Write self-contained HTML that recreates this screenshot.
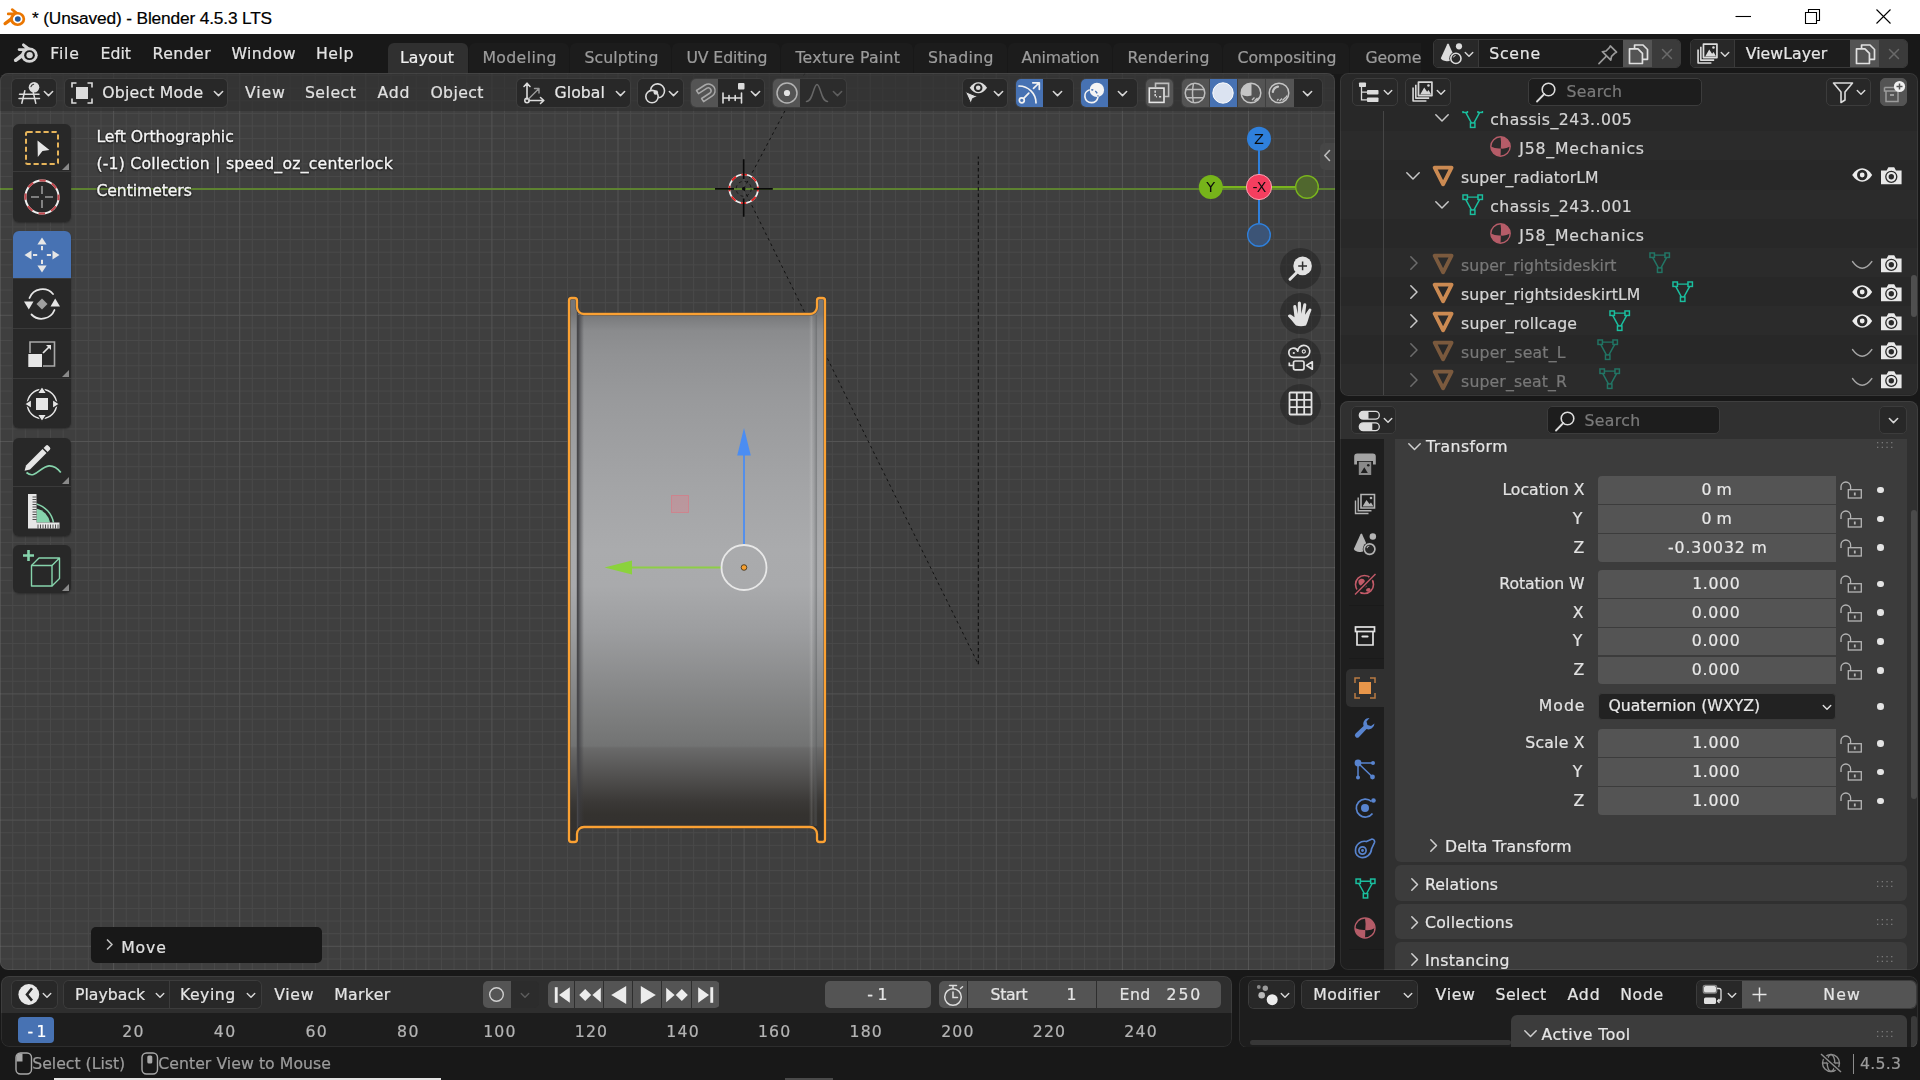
<!DOCTYPE html>
<html lang="en">
<head>
<meta charset="utf-8">
<title>* (Unsaved) - Blender 4.5.3 LTS</title>
<style>
*{box-sizing:border-box;margin:0;padding:0}
html,body{width:1920px;height:1080px;overflow:hidden;background:#181818}
body{position:relative;font-family:"DejaVu Sans","Liberation Sans",sans-serif;font-size:15.7px;color:#e0e0e0;line-height:20px}
.a{position:absolute}
.t{position:absolute;white-space:pre;line-height:20px;height:20px;-webkit-text-stroke:0.22px currentColor}
svg{position:absolute;overflow:visible}
.area{position:absolute;border-radius:8px;overflow:hidden}
.area::after{content:"";position:absolute;left:0;top:0;right:0;bottom:0;border-radius:8px;border:1px solid rgba(255,255,255,0.075);pointer-events:none}
#vp,#outliner,#props,#timeline,#nodeed,#status,#topbar{will-change:transform}
.btn{position:absolute;background:#282828;border:1px solid #3a3a3a;border-radius:5px}
.dim{color:#9a9a9a}
.num{position:absolute;background:#545454;left:1597px;width:239px;height:28px}
.num .t{left:0;width:239px;text-align:center;top:4px;color:#e6e6e6}
.lbl{position:absolute;text-align:right;width:200px;left:1384px;white-space:pre;height:20px}
.dot{position:absolute;left:1877px;width:7px;height:7px;border-radius:50%;background:#e0e0e0}
.panel{position:absolute;left:1395px;width:512px;background:#3d3d3d;border-radius:6px}
</style>
</head>
<body>
<svg width="0" height="0" style="position:absolute;left:0;top:0;width:0;height:0;overflow:hidden" aria-hidden="true">
<defs>
<symbol id="chev" viewBox="0 0 12 8"><path d="M1.5 1.5 L6 6 L10.5 1.5" fill="none" stroke="currentColor" stroke-width="1.7" stroke-linecap="round" stroke-linejoin="round"/></symbol>
<symbol id="chevr" viewBox="0 0 8 12"><path d="M1.5 1.5 L6 6 L1.5 10.5" fill="none" stroke="currentColor" stroke-width="1.7" stroke-linecap="round" stroke-linejoin="round"/></symbol>

<symbol id="i-scene" viewBox="0 0 23 23"><path d="M7.200 2.200Q8 0.800 8.800 2.200L14 14Q12.500 19.600 6.500 19.200Q1.800 18.600 0.800 16.200Z" fill="currentColor"/><circle cx="19" cy="4.300" r="3.100" fill="currentColor"/><circle cx="15.900" cy="16.400" r="6.600" fill="#282828"/><circle cx="15.900" cy="16.400" r="5.100" fill="none" stroke="currentColor" stroke-width="1.600"/><path d="M13.400 15.400A2.800 2.800 0 0 1 15.600 13.400" fill="none" stroke="currentColor" stroke-width="1"/></symbol>
<symbol id="i-pin" viewBox="0 0 20 20"><path d="M12.2 2.5 L17.5 7.8 L16 8.6 L13.2 11.4 L12.6 14.6 L5.4 7.4 L8.6 6.8 L11.4 4Z" fill="none" stroke="currentColor" stroke-width="1.4" stroke-linejoin="round"/><path d="M8.6 11.4 L2.5 17.5" stroke="currentColor" stroke-width="1.4" stroke-linecap="round"/></symbol>
<symbol id="i-copy" viewBox="0 0 20 20"><path d="M6.5 5 V1.8 H14 L18 5.8 V14.5 H13.5" fill="none" stroke="currentColor" stroke-width="1.5" stroke-linejoin="round"/><path d="M2 5.2 H9.5 L13.5 9.2 V18.2 H2Z" fill="none" stroke="currentColor" stroke-width="1.5" stroke-linejoin="round"/></symbol>
<symbol id="i-x" viewBox="0 0 12 12"><path d="M1.5 1.5 L10.5 10.5 M10.5 1.5 L1.5 10.5" stroke="currentColor" stroke-width="1.5" stroke-linecap="round"/></symbol>
<symbol id="i-layers" viewBox="0 0 20 20"><path d="M6.5 1.8 H18.2 V13.5 H6.5Z" fill="none" stroke="currentColor" stroke-width="1.5" stroke-linejoin="round"/><path d="M8 12.5 L11.5 6.5 L14 10.2 L15.3 8.8 L17.5 12.5Z" fill="currentColor"/><circle cx="15.2" cy="4.8" r="1.1" fill="currentColor"/><path d="M4.2 4.2 V15.8 H15.8 M1.8 6.6 V18.2 H13.4" fill="none" stroke="currentColor" stroke-width="1.4" stroke-linejoin="round"/></symbol>
</defs>
</svg>

<!-- TITLEBAR -->
<div class="a" id="titlebar" style="left:0;top:0;width:1920px;height:34px;background:#fff">
<svg style="left:3px;top:7px" width="23" height="21" viewBox="0 0 23 21">
<path d="M1.2 15.2 L10.2 8.2 L5.2 8.2 A1.3 1.3 0 0 1 5.2 5.6 L10.6 5.6 L8.3 3.6 A1.3 1.3 0 0 1 10 1.6 L19.6 9 L12 11.4 L3 18 A1.5 1.5 0 0 1 1.2 15.2Z" fill="#ea7600"/>
<ellipse cx="14.6" cy="12" rx="7.6" ry="7" fill="#ea7600"/>
<ellipse cx="14.7" cy="12" rx="4.8" ry="4.4" fill="#fff"/>
<ellipse cx="14.8" cy="12" rx="2.9" ry="2.8" fill="#255a9b"/>
</svg>
<span class="t" style="letter-spacing:-0.15px;left:32px;top:7px;font-family:'Liberation Sans',sans-serif;font-size:17.3px;color:#000;line-height:22px;height:22px">* (Unsaved) - Blender 4.5.3 LTS</span>
<svg style="left:1735px;top:9px" width="160" height="16" viewBox="0 0 160 16" fill="none" stroke="#000" stroke-width="1.1">
<path d="M0.5 7.5 H16"/>
<path d="M70.5 3.5 H81.5 V14.5 H70.5Z"/><path d="M73.5 3.5 V0.5 H84.5 V11.5 H81.5"/>
<path d="M141.5 0.5 L155.5 14.5 M155.5 0.5 L141.5 14.5"/>
</svg>
</div>
<!-- TOPBAR -->
<div class="a" id="topbar" style="left:0;top:34px;width:1920px;height:40px;background:#181818">
<svg style="left:13px;top:8px" width="26" height="23" viewBox="0 0 23 21">
<path d="M1.2 15.2 L10.2 8.2 L5.2 8.2 A1.3 1.3 0 0 1 5.2 5.6 L10.6 5.6 L8.3 3.6 A1.3 1.3 0 0 1 10 1.6 L19.6 9 L12 11.4 L3 18 A1.5 1.5 0 0 1 1.2 15.2Z" fill="#d4d4d4"/>
<ellipse cx="14.6" cy="12" rx="7.6" ry="7" fill="#d4d4d4"/>
<ellipse cx="14.7" cy="12" rx="4.9" ry="4.5" fill="#181818"/>
<ellipse cx="14.8" cy="12" rx="2.9" ry="2.8" fill="#d4d4d4"/>
</svg>
<span class="t" style="letter-spacing:0.82px;left:50.2px;top:10.3px;color:#e3e3e3">File</span>
<span class="t" style="letter-spacing:-0.03px;left:100.6px;top:10.3px;color:#e3e3e3">Edit</span>
<span class="t" style="letter-spacing:0.43px;left:152.6px;top:10.3px;color:#e3e3e3">Render</span>
<span class="t" style="letter-spacing:0.47px;left:231.4px;top:10.3px;color:#e3e3e3">Window</span>
<span class="t" style="letter-spacing:0.58px;left:315.9px;top:10.3px;color:#e3e3e3">Help</span>
<div class="a" style="left:388px;top:9px;width:1040px;height:31px;overflow:hidden">
<div class="a" style="left:0px;top:0;width:79.5px;height:31px;border-radius:6px 6px 0 0;background:#303030"></div>
<span class="t" style="letter-spacing:0.13px;left:11.9px;top:5.3px;color:#f0f0f0">Layout</span>
<div class="a" style="left:80.5px;top:0;width:100.5px;height:31px;border-radius:6px 6px 0 0;background:#1c1c1c"></div>
<span class="t" style="letter-spacing:0.38px;left:94.4px;top:5.3px;color:#9c9c9c">Modeling</span>
<div class="a" style="left:182px;top:0;width:101px;height:31px;border-radius:6px 6px 0 0;background:#1c1c1c"></div>
<span class="t" style="letter-spacing:0.09px;left:196.4px;top:5.3px;color:#9c9c9c">Sculpting</span>
<div class="a" style="left:284px;top:0;width:108px;height:31px;border-radius:6px 6px 0 0;background:#1c1c1c"></div>
<span class="t" style="letter-spacing:-0.09px;left:298.4px;top:5.3px;color:#9c9c9c">UV Editing</span>
<div class="a" style="left:393px;top:0;width:132px;height:31px;border-radius:6px 6px 0 0;background:#1c1c1c"></div>
<span class="t" style="letter-spacing:0.27px;left:407.4px;top:5.3px;color:#9c9c9c">Texture Paint</span>
<div class="a" style="left:526px;top:0;width:92.5px;height:31px;border-radius:6px 6px 0 0;background:#1c1c1c"></div>
<span class="t" style="letter-spacing:0.29px;left:539.9px;top:5.3px;color:#9c9c9c">Shading</span>
<div class="a" style="left:619.5px;top:0;width:104.5px;height:31px;border-radius:6px 6px 0 0;background:#1c1c1c"></div>
<span class="t" style="letter-spacing:-0.25px;left:633.4px;top:5.3px;color:#9c9c9c">Animation</span>
<div class="a" style="left:725px;top:0;width:109px;height:31px;border-radius:6px 6px 0 0;background:#1c1c1c"></div>
<span class="t" style="letter-spacing:0.24px;left:739.4px;top:5.3px;color:#9c9c9c">Rendering</span>
<div class="a" style="left:835px;top:0;width:126px;height:31px;border-radius:6px 6px 0 0;background:#1c1c1c"></div>
<span class="t" style="letter-spacing:0.07px;left:849.4px;top:5.3px;color:#9c9c9c">Compositing</span>
<div class="a" style="left:962px;top:0;width:90px;height:31px;border-radius:6px 6px 0 0;background:#1c1c1c"></div>
<span class="t" style="left:977.5px;top:5.3px;color:#9c9c9c;letter-spacing:-0.1px">Geometry Nodes</span>
</div>
<div class="a" style="left:1421px;top:0;width:12px;height:40px;background:#181818"></div>
<div class="a" style="left:1433px;top:5px;width:248px;height:29px;border-radius:5px;background:#1d1d1d;border:1px solid #3a3a3a;overflow:hidden">
<div class="a" style="left:0;top:0;width:45px;height:27px;background:#282828;border-right:1px solid #3a3a3a"></div>
<div class="a" style="left:189px;top:0;width:29px;height:27px;background:#545454"></div>
<div class="a" style="left:218px;top:0;width:30px;height:27px;background:#3b3b3b"></div>
</div>
<svg style="left:1439.500px;top:8px;color:#dcdcdc" width="23" height="23"><use href="#i-scene" width="23" height="23"/></svg>
<svg style="left:1464px;top:17px;color:#d6d6d6" width="10" height="7"><use href="#chev" width="10" height="7"/></svg>
<span class="t" style="letter-spacing:0.79px;left:1489.2px;top:10.3px;color:#e6e6e6">Scene</span>
<svg style="left:1595.500px;top:8.500px;color:#9a9a9a" width="23.500" height="23.500"><use href="#i-pin" width="23.500" height="23.500"/></svg>
<svg style="left:1626.500px;top:8.500px;color:#e0e0e0" width="23" height="22.500"><use href="#i-copy" width="23" height="22.500"/></svg>
<svg style="left:1661px;top:14px;color:#6a6a6a" width="12" height="12"><use href="#i-x" width="12" height="12"/></svg>
<div class="a" style="left:1690px;top:5px;width:218px;height:29px;border-radius:5px;background:#1d1d1d;border:1px solid #3a3a3a;overflow:hidden">
<div class="a" style="left:0;top:0;width:44px;height:27px;background:#282828;border-right:1px solid #3a3a3a"></div>
<div class="a" style="left:159px;top:0;width:29px;height:27px;background:#545454"></div>
<div class="a" style="left:188px;top:0;width:30px;height:27px;background:#3b3b3b"></div>
</div>
<svg style="left:1695.500px;top:8px;color:#dcdcdc" width="23" height="23"><use href="#i-layers" width="23" height="23"/></svg>
<svg style="left:1720px;top:17px;color:#d6d6d6" width="10" height="7"><use href="#chev" width="10" height="7"/></svg>
<span class="t" style="letter-spacing:0.07px;left:1745.7px;top:10.3px;color:#e6e6e6">ViewLayer</span>
<svg style="left:1853.500px;top:8.500px;color:#e0e0e0" width="23" height="22.500"><use href="#i-copy" width="23" height="22.500"/></svg>
<svg style="left:1888px;top:14px;color:#6a6a6a" width="12" height="12"><use href="#i-x" width="12" height="12"/></svg>
</div>
<!-- VIEWPORT -->
<div class="area" id="vp" style="left:0px;top:73px;width:1335px;height:897px;background:#3f3f3f">
<svg id="vpsvg" style="left:0;top:-73px" width="1920" height="1080" viewBox="0 0 1920 1080">
<defs>
<linearGradient id="gbar" gradientUnits="userSpaceOnUse" x1="0" y1="314" x2="0" y2="827">
<stop offset="0" stop-color="#757678"/><stop offset="0.012" stop-color="#7e7f81"/><stop offset="0.032" stop-color="#8a8b8d"/><stop offset="0.08" stop-color="#919294"/><stop offset="0.17" stop-color="#999a9c"/><stop offset="0.33" stop-color="#a3a4a6"/><stop offset="0.46" stop-color="#aaabad"/><stop offset="0.53" stop-color="#a9aaac"/><stop offset="0.62" stop-color="#9c9d9f"/><stop offset="0.72" stop-color="#898a8b"/><stop offset="0.80" stop-color="#7a7b7b"/><stop offset="0.842" stop-color="#727373"/><stop offset="0.846" stop-color="#6a6a6a"/><stop offset="0.90" stop-color="#525150"/><stop offset="0.95" stop-color="#3b3937"/><stop offset="0.975" stop-color="#34322f"/><stop offset="1" stop-color="#33312f"/>
</linearGradient>
<linearGradient id="gls" gradientUnits="userSpaceOnUse" x1="578" y1="0" x2="584" y2="0">
<stop offset="0" stop-color="#3c3c40" stop-opacity="0.85"/><stop offset="0.4" stop-color="#3c3c40" stop-opacity="0.5"/><stop offset="1" stop-color="#3c3c40" stop-opacity="0"/>
</linearGradient>
<linearGradient id="grs" gradientUnits="userSpaceOnUse" x1="809" y1="0" x2="817.200" y2="0">
<stop offset="0" stop-color="#fff" stop-opacity="0"/><stop offset="0.3" stop-color="#fff" stop-opacity="0.14"/><stop offset="0.55" stop-color="#808284" stop-opacity="0.10"/><stop offset="0.9" stop-color="#55585a" stop-opacity="0.45"/><stop offset="1" stop-color="#55585a" stop-opacity="0.1"/>
</linearGradient>
</defs>
<path d="M0.11 73V971M12.72 73V971M25.33 73V971M37.94 73V971M50.55 73V971M63.16 73V971M75.77 73V971M88.38 73V971M100.99 73V971M126.21 73V971M138.82 73V971M151.43 73V971M164.04 73V971M176.65 73V971M189.26 73V971M201.87 73V971M214.48 73V971M227.09 73V971M252.31 73V971M264.92 73V971M277.53 73V971M290.14 73V971M302.75 73V971M315.36 73V971M327.97 73V971M340.58 73V971M353.19 73V971M378.41 73V971M391.02 73V971M403.63 73V971M416.24 73V971M428.85 73V971M441.46 73V971M454.07 73V971M466.68 73V971M479.29 73V971M504.51 73V971M517.12 73V971M529.73 73V971M542.34 73V971M554.95 73V971M567.56 73V971M580.17 73V971M592.78 73V971M605.39 73V971M630.61 73V971M643.22 73V971M655.83 73V971M668.44 73V971M681.05 73V971M693.66 73V971M706.27 73V971M718.88 73V971M731.49 73V971M756.71 73V971M769.32 73V971M781.93 73V971M794.54 73V971M807.15 73V971M819.76 73V971M832.37 73V971M844.98 73V971M857.59 73V971M882.81 73V971M895.42 73V971M908.03 73V971M920.64 73V971M933.25 73V971M945.86 73V971M958.47 73V971M971.08 73V971M983.69 73V971M1008.91 73V971M1021.52 73V971M1034.13 73V971M1046.74 73V971M1059.35 73V971M1071.96 73V971M1084.57 73V971M1097.18 73V971M1109.79 73V971M1135.01 73V971M1147.62 73V971M1160.23 73V971M1172.84 73V971M1185.45 73V971M1198.06 73V971M1210.67 73V971M1223.28 73V971M1235.89 73V971M1261.11 73V971M1273.72 73V971M1286.33 73V971M1298.94 73V971M1311.55 73V971M1324.16 73V971M0 75.52H1336M0 88.14H1336M0 100.76H1336M0 113.38H1336M0 126.00H1336M0 138.62H1336M0 151.24H1336M0 163.86H1336M0 176.48H1336M0 201.72H1336M0 214.34H1336M0 226.96H1336M0 239.58H1336M0 252.20H1336M0 264.82H1336M0 277.44H1336M0 290.06H1336M0 302.68H1336M0 327.92H1336M0 340.54H1336M0 353.16H1336M0 365.78H1336M0 378.40H1336M0 391.02H1336M0 403.64H1336M0 416.26H1336M0 428.88H1336M0 454.12H1336M0 466.74H1336M0 479.36H1336M0 491.98H1336M0 504.60H1336M0 517.22H1336M0 529.84H1336M0 542.46H1336M0 555.08H1336M0 580.32H1336M0 592.94H1336M0 605.56H1336M0 618.18H1336M0 630.80H1336M0 643.42H1336M0 656.04H1336M0 668.66H1336M0 681.28H1336M0 706.52H1336M0 719.14H1336M0 731.76H1336M0 744.38H1336M0 757.00H1336M0 769.62H1336M0 782.24H1336M0 794.86H1336M0 807.48H1336M0 832.72H1336M0 845.34H1336M0 857.96H1336M0 870.58H1336M0 883.20H1336M0 895.82H1336M0 908.44H1336M0 921.06H1336M0 933.68H1336M0 958.92H1336" stroke="#4a4a4a" stroke-width="1" fill="none"/>
<path d="M113.60 73V971M239.70 73V971M365.80 73V971M491.90 73V971M618.00 73V971M744.10 73V971M870.20 73V971M996.30 73V971M1122.40 73V971M1248.50 73V971M0 189.10H1336M0 315.30H1336M0 441.50H1336M0 567.70H1336M0 693.90H1336M0 820.10H1336M0 946.30H1336" stroke="#545454" stroke-width="1" fill="none"/>
<path d="M0 189H1336" stroke="#649628" stroke-width="1.600" fill="none"/>
<g stroke="#0c0c0c" fill="none"><path d="M743.700 188.800L805 73" stroke-width="1" stroke-dasharray="2.800 3.300" opacity="0.900"/><path d="M743.700 188.800L978.300 664.300" stroke-width="1" stroke-dasharray="2.800 3.300" opacity="0.900"/><path d="M978.300 664.300V156.500" stroke-width="1.100" stroke-dasharray="3.500 2.900"/></g>
<path d="M569 300.500 Q569 298 571.500 298 H574.500 Q577 298 577 300.500 V307 A7 7 0 0 0 584 314 H810 A7 7 0 0 0 817 307 V300.500 Q817 298 819.500 298 H822.500 Q825 298 825 300.500 V839.500 Q825 842 822.500 842 H819.500 Q817 842 817 839.500 V834 A7 7 0 0 0 810 827 H584 A7 7 0 0 0 577 834 V839.500 Q577 842 574.500 842 H571.500 Q569 842 569 839.500Z" fill="url(#gbar)"/>
<rect x="578" y="315" width="6" height="511" fill="url(#gls)"/>
<path d="M577.500 312V829" stroke="#47474a" stroke-width="1.400"/>
<rect x="809" y="315" width="8.200" height="511" fill="url(#grs)"/>
<path d="M569 300.500 Q569 298 571.500 298 H574.500 Q577 298 577 300.500 V307 A7 7 0 0 0 584 314 H810 A7 7 0 0 0 817 307 V300.500 Q817 298 819.500 298 H822.500 Q825 298 825 300.500 V839.500 Q825 842 822.500 842 H819.500 Q817 842 817 839.500 V834 A7 7 0 0 0 810 827 H584 A7 7 0 0 0 577 834 V839.500 Q577 842 574.500 842 H571.500 Q569 842 569 839.500Z" fill="none" stroke="#2e3238" stroke-opacity="0.450" stroke-width="3.800" stroke-linejoin="round"/>
<path d="M569 300.500 Q569 298 571.500 298 H574.500 Q577 298 577 300.500 V307 A7 7 0 0 0 584 314 H810 A7 7 0 0 0 817 307 V300.500 Q817 298 819.500 298 H822.500 Q825 298 825 300.500 V839.500 Q825 842 822.500 842 H819.500 Q817 842 817 839.500 V834 A7 7 0 0 0 810 827 H584 A7 7 0 0 0 577 834 V839.500 Q577 842 574.500 842 H571.500 Q569 842 569 839.500Z" fill="none" stroke="#fba133" stroke-width="2.300" stroke-linejoin="round"/>
<path d="M744 544V452" stroke="#4b8df2" stroke-width="1.800"/><path d="M744 428L750.800 455.500H737.200Z" fill="#4b8df2"/>
<path d="M721 567.500H630" stroke="#8bd23c" stroke-width="1.800" opacity="0.900"/><path d="M604.500 567.500L632 560.500V574.500Z" fill="#8bd23c"/>
<rect x="671.500" y="495.500" width="17" height="17" fill="#e87888" fill-opacity="0.330" stroke="#e4707e" stroke-opacity="0.550" stroke-width="1"/>
<circle cx="744" cy="567.500" r="22.500" fill="none" stroke="#e8e8e8" stroke-width="1.800"/>
<circle cx="744" cy="567.500" r="2.800" fill="#f7a030" stroke="#3a2a10" stroke-width="0.800"/>
<g fill="none"><circle cx="743.700" cy="188.800" r="14.300" stroke="#f2f2f2" stroke-width="1.700"/><circle cx="743.700" cy="188.800" r="14.300" stroke="#e81e1e" stroke-width="1.700" stroke-dasharray="5.600 5.630" stroke-dashoffset="2.800"/><path d="M715 188.800H734M753.500 188.800H772.800M743.700 159.200V179M743.700 198.500V216.800" stroke="#0a0a0a" stroke-width="1.700"/><circle cx="743.700" cy="188.800" r="7.500" stroke="#111" stroke-width="1" stroke-dasharray="3 3" opacity="0.800"/><circle cx="743.700" cy="188.800" r="1.800" fill="#0a0a0a"/></g>
</svg>
<div class="a" style="left:0;top:0;width:1335px;height:38px;background:rgba(48,48,48,0.7)"></div>
<div class="a" style="left:12px;top:5.5px;width:44px;height:28px;border-radius:5px;overflow:hidden;box-shadow:0 0 0 1px rgba(70,70,70,0.55)"><div class="a" style="left:0px;top:0;width:44px;height:100%;background:#282828"></div></div>
<div class="a" style="left:65px;top:5.5px;width:162px;height:28px;border-radius:5px;overflow:hidden;box-shadow:0 0 0 1px rgba(70,70,70,0.55)"><div class="a" style="left:0px;top:0;width:162px;height:100%;background:#282828"></div></div>
<div class="a" style="left:517px;top:5.5px;width:112.5px;height:28px;border-radius:5px;overflow:hidden;box-shadow:0 0 0 1px rgba(70,70,70,0.55)"><div class="a" style="left:0px;top:0;width:112.5px;height:100%;background:#282828"></div></div>
<div class="a" style="left:638px;top:5.5px;width:44.5px;height:28px;border-radius:5px;overflow:hidden;box-shadow:0 0 0 1px rgba(70,70,70,0.55)"><div class="a" style="left:0px;top:0;width:44.5px;height:100%;background:#282828"></div></div>
<div class="a" style="left:690.7px;top:5.5px;width:73.8px;height:28px;border-radius:5px;overflow:hidden;box-shadow:0 0 0 1px rgba(70,70,70,0.55)"><div class="a" style="left:0px;top:0;width:27.8px;height:100%;background:#545454"></div><div class="a" style="left:27.8px;top:0;width:46px;height:100%;background:#282828"></div></div>
<div class="a" style="left:772.8px;top:5.5px;width:73.2px;height:28px;border-radius:5px;overflow:hidden;box-shadow:0 0 0 1px rgba(70,70,70,0.55)"><div class="a" style="left:0px;top:0;width:27.7px;height:100%;background:#545454"></div><div class="a" style="left:27.7px;top:0;width:45.5px;height:100%;background:#2c2c2c"></div></div>
<div class="a" style="left:962.6px;top:5.5px;width:44.9px;height:28px;border-radius:5px;overflow:hidden;box-shadow:0 0 0 1px rgba(70,70,70,0.55)"><div class="a" style="left:0px;top:0;width:44.9px;height:100%;background:#282828"></div></div>
<div class="a" style="left:1016px;top:5.5px;width:56.5px;height:28px;border-radius:5px;overflow:hidden;box-shadow:0 0 0 1px rgba(70,70,70,0.55)"><div class="a" style="left:0px;top:0;width:27px;height:100%;background:#4772b3"></div><div class="a" style="left:27px;top:0;width:29.5px;height:100%;background:#282828"></div></div>
<div class="a" style="left:1081px;top:5.5px;width:56px;height:28px;border-radius:5px;overflow:hidden;box-shadow:0 0 0 1px rgba(70,70,70,0.55)"><div class="a" style="left:0px;top:0;width:27px;height:100%;background:#4772b3"></div><div class="a" style="left:27px;top:0;width:29px;height:100%;background:#282828"></div></div>
<div class="a" style="left:1146px;top:5.5px;width:27px;height:28px;border-radius:5px;overflow:hidden;box-shadow:0 0 0 1px rgba(70,70,70,0.55)"><div class="a" style="left:0px;top:0;width:27px;height:100%;background:#545454"></div></div>
<div class="a" style="left:1182px;top:5.5px;width:140px;height:28px;border-radius:5px;overflow:hidden;box-shadow:0 0 0 1px rgba(70,70,70,0.55)"><div class="a" style="left:0px;top:0;width:27.5px;height:100%;background:#545454"></div><div class="a" style="left:27.5px;top:0;width:27.5px;height:100%;background:#4772b3"></div><div class="a" style="left:55px;top:0;width:28.5px;height:100%;background:#545454"></div><div class="a" style="left:83.5px;top:0;width:28px;height:100%;background:#545454"></div><div class="a" style="left:111.5px;top:0;width:28.5px;height:100%;background:#282828"></div></div>
<div class="a" style="left:1209px;top:5.5px;width:1px;height:28px;background:#3f3f3f"></div>
<div class="a" style="left:1237px;top:5.5px;width:1px;height:28px;background:#3f3f3f"></div>
<div class="a" style="left:1265.2px;top:5.5px;width:1px;height:28px;background:#3f3f3f"></div>
<span class="t" style="letter-spacing:0.21px;left:102.2px;top:9.9px;color:#e6e6e6">Object Mode</span>
<span class="t" style="letter-spacing:0.92px;left:244.9px;top:9.9px;color:#e0e0e0">View</span>
<span class="t" style="letter-spacing:0.52px;left:304.9px;top:9.9px;color:#e0e0e0">Select</span>
<span class="t" style="letter-spacing:0.81px;left:377.4px;top:9.9px;color:#e0e0e0">Add</span>
<span class="t" style="letter-spacing:0.38px;left:430.4px;top:9.9px;color:#e0e0e0">Object</span>
<span class="t" style="letter-spacing:0.05px;left:554.6px;top:9.9px;color:#e6e6e6">Global</span>
<svg style="left:43px;top:16.5px;color:#d8d8d8" width="11" height="7.5" viewBox="0 0 11 7.5"><use href="#chev" width="11" height="7.5"/></svg>
<svg style="left:213px;top:16.5px;color:#d8d8d8" width="11" height="7.5" viewBox="0 0 11 7.5"><use href="#chev" width="11" height="7.5"/></svg>
<svg style="left:615px;top:16.5px;color:#d8d8d8" width="11" height="7.5" viewBox="0 0 11 7.5"><use href="#chev" width="11" height="7.5"/></svg>
<svg style="left:668px;top:16.5px;color:#d8d8d8" width="11" height="7.5" viewBox="0 0 11 7.5"><use href="#chev" width="11" height="7.5"/></svg>
<svg style="left:750px;top:16.5px;color:#d8d8d8" width="11" height="7.5" viewBox="0 0 11 7.5"><use href="#chev" width="11" height="7.5"/></svg>
<svg style="left:832px;top:16.5px;color:#5e5e5e" width="11" height="7.5" viewBox="0 0 11 7.5"><use href="#chev" width="11" height="7.5"/></svg>
<svg style="left:992.9px;top:16.8px;color:#d8d8d8" width="11" height="7.5" viewBox="0 0 11 7.5"><use href="#chev" width="11" height="7.5"/></svg>
<svg style="left:1052px;top:16.8px;color:#d8d8d8" width="11" height="7.5" viewBox="0 0 11 7.5"><use href="#chev" width="11" height="7.5"/></svg>
<svg style="left:1117px;top:16.8px;color:#d8d8d8" width="11" height="7.5" viewBox="0 0 11 7.5"><use href="#chev" width="11" height="7.5"/></svg>
<svg style="left:1302px;top:16.8px;color:#d8d8d8" width="11" height="7.5" viewBox="0 0 11 7.5"><use href="#chev" width="11" height="7.5"/></svg>
<svg style="left:18px;top:7px;" width="24" height="26" viewBox="0 0 24 26"><g fill="none" stroke="#dcdcdc" stroke-width="1.500" stroke-linecap="round"><path d="M1.500 14.200H21M1 18.400H21.500M6.800 10.800L3.800 23.300M15.300 12.500L17.800 23.300"/></g><circle cx="16" cy="7.300" r="5.300" fill="#dcdcdc"/><path d="M13 6.600A3.300 3.300 0 0 1 15.600 4.200" stroke="#282828" stroke-width="1.100" fill="none" stroke-linecap="round"/></svg>
<svg style="left:71px;top:8.5px;" width="22" height="22" viewBox="0 0 22 22"><path d="M1 5.5V1H5.5M16.5 1H21V5.5M21 16.5V21H16.5M5.5 21H1V16.5" fill="none" stroke="#dcdcdc" stroke-width="1.6"/><rect x="5" y="5" width="12" height="12" fill="#dcdcdc"/></svg>
<svg style="left:522px;top:8px;" width="24" height="24" viewBox="0 0 24 24"><g fill="none" stroke="#dcdcdc" stroke-width="1.6" stroke-linecap="round" stroke-linejoin="round"><path d="M5 18.5V2.5M2 5.5L5 2.2L8 5.5M7 19.5H21.5M18.5 16.5L21.8 19.5L18.5 22.5"/><circle cx="5" cy="19.5" r="2.2"/></g><g fill="none" stroke="#9a9a9a" stroke-width="1.4" stroke-linecap="round" stroke-linejoin="round"><path d="M7 17.5L16.5 8M12.5 7.5H17V12"/></g></svg>
<svg style="left:643px;top:8px;" width="24" height="24" viewBox="0 0 24 24"><g fill="none" stroke="#dcdcdc" stroke-width="1.600"><circle cx="9" cy="15.600" r="6.200"/><path d="M7.600 8.800A7 7 0 1 1 15.400 16.800"/></g><circle cx="12.800" cy="11.500" r="2.300" fill="#dcdcdc"/></svg>
<svg style="left:693px;top:8px;" width="24" height="24" viewBox="0 0 24 24"><path d="M3.5 9.5L12 4A6.6 6.6 0 0 1 19 15.2L10.6 20.6L8.6 17.5L17 12A2.9 2.9 0 0 0 14 7.1L5.5 12.6Z" fill="none" stroke="#a8a8a8" stroke-width="1.5" stroke-linejoin="round"/></svg>
<svg style="left:721px;top:8px;" width="26" height="24" viewBox="0 0 26 24"><g stroke="#dcdcdc" stroke-width="1.6" fill="none" stroke-linecap="round"><path d="M2 12V22M20.5 12V22M2 17H20.5M8 14.5V19.5M14.2 14.5V19.5"/></g><rect x="17" y="2" width="6.5" height="6.5" rx="1" fill="#dcdcdc"/></svg>
<svg style="left:775.5px;top:8.5px;" width="22" height="22" viewBox="0 0 22 22"><circle cx="11" cy="11" r="10" fill="none" stroke="#b4b4b4" stroke-width="1.500"/><circle cx="11" cy="11" r="3.100" fill="#e4e4e4"/></svg>
<svg style="left:805px;top:9px;" width="24" height="22" viewBox="0 0 24 22"><path d="M1.5 19.5C8 19.5 8.5 2.5 12 2.5S16 19.5 22.5 19.5" fill="none" stroke="#666" stroke-width="1.5" stroke-linecap="round"/></svg>
<svg style="left:965px;top:7px;" width="24" height="26" viewBox="0 0 24 26"><path d="M4.700 7.750C7.500 3.800 10.300 2.200 13.400 2.200S19.300 3.800 22.100 7.750C19.300 11.700 16.500 13.300 13.400 13.300S7.500 11.700 4.700 7.750Z" fill="#dcdcdc"/><circle cx="13.200" cy="7.750" r="4.300" fill="#282828"/><circle cx="13.200" cy="7.750" r="2.300" fill="#dcdcdc"/><path d="M0.300 11.500L12.600 16.600L7.600 18.600L5.900 23.700Z" fill="#dcdcdc" stroke="#282828" stroke-width="1"/></svg>
<svg style="left:1018px;top:8px;" width="24" height="24" viewBox="0 0 24 24"><g fill="none" stroke="#f2f2f2" stroke-width="1.700" stroke-linecap="round" stroke-linejoin="round"><circle cx="3.800" cy="19.300" r="2.500"/><path d="M5.700 17.400L10.800 12.200M15.500 7.400L21 2M14.800 1.800H21.300V8.300M1 5A17 17 0 0 1 18 21.800"/></g></svg>
<svg style="left:1084px;top:8px;" width="24" height="24" viewBox="0 0 24 24"><circle cx="12.900" cy="8.900" r="7.200" fill="#f4f4f4"/><path d="M5.700 8.700A6.600 6.600 0 1 0 14 15.900" fill="none" stroke="#f4f4f4" stroke-width="1.700"/><path d="M7.300 8.700A6.600 6.600 0 0 1 13.900 15.300" fill="none" stroke="#4772b3" stroke-width="1.500" stroke-dasharray="3 2.200" stroke-dashoffset="1"/></svg>
<svg style="left:1148px;top:8px;" width="24" height="24" viewBox="0 0 24 24"><g fill="none" stroke-width="1.600" stroke-linejoin="miter"><path d="M7.500 6.300V2.400H20.600V15.500H16.800" stroke="#bdbdbd"/><rect x="1.300" y="7.100" width="14.700" height="14.300" stroke="#e6e6e6"/></g><path d="M7.200 9.500V15.800H9M11 15.800H13.500" stroke="#d8d8d8" stroke-width="1.500" fill="none" stroke-dasharray="2.200 1.400"/></svg>
<svg style="left:1183px;top:8.1px;" width="24" height="24" viewBox="0 0 24 24"><g fill="none" stroke="#bcbcbc" stroke-width="1.500"><circle cx="12" cy="12" r="9.800"/><path d="M3 8.600H21M3 16.700H21M10.500 2.300Q8.500 12 10.500 21.700"/></g></svg>
<svg style="left:1211.1px;top:8.1px;" width="24" height="24" viewBox="0 0 24 24"><circle cx="12" cy="12" r="10.200" fill="#dbe3f1" stroke="#fff" stroke-width="1"/></svg>
<svg style="left:1239px;top:8.1px;" width="24" height="24" viewBox="0 0 24 24"><circle cx="12" cy="12" r="9.800" fill="none" stroke="#c4c4c4" stroke-width="1.500"/><path d="M12 2.200A9.800 9.800 0 0 0 2.400 13.500Q7 16.500 12 14.500Z" fill="#c4c4c4"/><path d="M12 2.200V14.500" stroke="#c4c4c4" stroke-width="1"/><g stroke="#c4c4c4" stroke-width="1.300"><path d="M13 19L15.500 16.500M15.500 20L18.500 17M18 19.500L20.500 16.500"/></g></svg>
<svg style="left:1267.1px;top:8.1px;" width="24" height="24" viewBox="0 0 24 24"><circle cx="12" cy="12" r="9.800" fill="none" stroke="#c4c4c4" stroke-width="1.500"/><path d="M5.800 11A6.600 6.600 0 0 1 11 5.600" stroke="#c4c4c4" stroke-width="2.200" fill="none" stroke-linecap="round"/><g stroke="#c4c4c4" stroke-width="1.300"><path d="M10 19.500L11.500 18M12.500 20L15 17.500M15.500 19.500L18.500 16.500M18.500 17L20 14.500"/></g></svg>
<div class="a" style="left:13px;top:51.2px;width:58px;height:97.5px;border-radius:6px;overflow:hidden;background:#3a3a3a;box-shadow:0 1px 2px rgba(0,0,0,0.35)"><div class="a" style="left:0;top:0px;width:58px;height:47.3px;background:#282828"></div><div class="a" style="left:0;top:48.3px;width:58px;height:49.2px;background:#282828"></div></div>
<div class="a" style="left:13px;top:158.2px;width:58px;height:197.1px;border-radius:6px;overflow:hidden;background:#3a3a3a;box-shadow:0 1px 2px rgba(0,0,0,0.35)"><div class="a" style="left:0;top:0px;width:58px;height:47.3px;background:#4772b3"></div><div class="a" style="left:0;top:48.3px;width:58px;height:49px;background:#282828"></div><div class="a" style="left:0;top:98.3px;width:58px;height:49px;background:#282828"></div><div class="a" style="left:0;top:148.3px;width:58px;height:48.8px;background:#282828"></div></div>
<div class="a" style="left:13px;top:365px;width:58px;height:97.5px;border-radius:6px;overflow:hidden;background:#3a3a3a;box-shadow:0 1px 2px rgba(0,0,0,0.35)"><div class="a" style="left:0;top:0px;width:58px;height:47.5px;background:#282828"></div><div class="a" style="left:0;top:48.5px;width:58px;height:49px;background:#282828"></div></div>
<div class="a" style="left:13px;top:472px;width:58px;height:47.5px;border-radius:6px;overflow:hidden;background:#3a3a3a;box-shadow:0 1px 2px rgba(0,0,0,0.35)"><div class="a" style="left:0;top:0px;width:58px;height:47.5px;background:#282828"></div></div>
<svg style="left:24px;top:57px;" width="36" height="36" viewBox="0 0 36 36"><rect x="2" y="2" width="32" height="32" rx="1.5" fill="none" stroke="#e6b45a" stroke-width="2" stroke-dasharray="5.2 2.8"/><path d="M13.5 10.5L25.5 20L18.5 21L13.8 27Z" fill="#e6e6e6"/></svg>
<svg style="left:61.5px;top:89.5px;" width="7" height="7" viewBox="0 0 7 7"><path d="M7 0V7H0Z" fill="#8a8a8a"/></svg>
<svg style="left:22px;top:103.7px;" width="40" height="40" viewBox="0 0 40 40"><circle cx="20" cy="20" r="16.6" fill="none" stroke="#f0f0f0" stroke-width="2"/><circle cx="20" cy="20" r="16.6" fill="none" stroke="#c4484e" stroke-width="2" stroke-dasharray="6.5 6.54" stroke-dashoffset="3.2"/><path d="M9 20H17M23 20H31M20 9V17M20 23V31" stroke="#9a9a9a" stroke-width="1.6"/></svg>
<svg style="left:22px;top:162px;" width="40" height="40" viewBox="0 0 40 40"><g fill="#e6e6e6"><path d="M20 2.5L24.6 9.5H15.4Z"/><path d="M20 37.5L24.6 30.5H15.4Z"/><path d="M2.5 20L9.5 15.4V24.6Z"/><path d="M37.500 20L30.5 15.4V24.6Z"/><rect x="19" y="11" width="2" height="4.2"/><rect x="19" y="24.8" width="2" height="4.2"/><rect x="11" y="19" width="4.2" height="2"/><rect x="24.8" y="19" width="4.200" height="2"/></g></svg>
<svg style="left:21.7px;top:211.2px;" width="40" height="40" viewBox="0 0 40 40"><g fill="none" stroke="#e6e6e6" stroke-width="1.8" stroke-linecap="round"><path d="M7.5 14A14 14 0 0 1 31 10"/><path d="M32.5 26A14 14 0 0 1 9.5 30.5"/></g><path d="M2 17.5H11.5L6.8 25.5Z" fill="#e6e6e6"/><path d="M28.5 22.500H38L33.2 14.5Z" fill="#e6e6e6"/><path d="M20 14.500L25.500 20L20 25.500L14.500 20Z" fill="#a0a0a0"/></svg>
<svg style="left:27px;top:266px;" width="30" height="30" viewBox="0 0 30 30"><path d="M3 14V3H27.5V27H16" fill="none" stroke="#a8a8a8" stroke-width="1.6"/><rect x="1.3" y="15" width="13.7" height="13" fill="#e6e6e6"/><path d="M16 14L23.500 6.500" stroke="#e6e6e6" stroke-width="1.7"/><path d="M19 6H24V11Z" fill="#e6e6e6"/></svg>
<svg style="left:61.5px;top:297px;" width="7" height="7" viewBox="0 0 7 7"><path d="M7 0V7H0Z" fill="#8a8a8a"/></svg>
<svg style="left:21.7px;top:311.2px;" width="40" height="40" viewBox="0 0 40 40"><circle cx="20" cy="20" r="14.6" fill="none" stroke="#e6e6e6" stroke-width="1.5"/><g fill="#e6e6e6" stroke="#282828" stroke-width="1.2"><path d="M20 2.500L24.600 9.500H15.400Z"/><path d="M20 37.500L24.600 30.500H15.400Z"/><path d="M2.500 20L9.500 15.400V24.600Z"/><path d="M37.500 20L30.500 15.400V24.600Z"/></g><rect x="14" y="14" width="12" height="12" fill="#e6e6e6"/></svg>
<svg style="left:22px;top:369px;" width="40" height="40" viewBox="0 0 40 40"><path d="M4 23.500L20.500 7L24.500 11L8 27.500L2.600 28.800Z" fill="#e6e6e6"/><path d="M21.600 5.900L23.800 3.700A1.800 1.800 0 0 1 26.300 3.700L27.800 5.200A1.800 1.800 0 0 1 27.800 7.700L25.600 9.900Z" fill="#e6e6e6"/><path d="M4.500 30.500C13 38 18 24.500 27 23.800C33 23.500 36.500 27.500 38.800 30.500" fill="none" stroke="#86d4ac" stroke-width="1.700"/></svg>
<svg style="left:61.5px;top:403.5px;" width="7" height="7" viewBox="0 0 7 7"><path d="M7 0V7H0Z" fill="#8a8a8a"/></svg>
<svg style="left:26px;top:418px;" width="36" height="40" viewBox="0 0 36 40"><path d="M10.500 13A24 24 0 0 1 27.500 31.500" fill="none" stroke="#86d4ac" stroke-width="1.5"/><path d="M10.500 17.500A17 17 0 0 1 24 31.500H10.500Z" fill="#86d4ac"/><path d="M2 3H10.500V31.500H33.500V37.500H2Z" fill="#e6e6e6"/><g stroke="#282828" stroke-width="0.8"><path d="M6.500 6H10.500M6.500 8.500H10.500M6.500 11H10.500M6.500 13.500H10.500M6.500 16H10.500M6.500 18.500H10.500M6.500 21H10.500M6.500 23.500H10.500M6.500 26H10.500M6.500 28.500H10.500"/><path d="M12 33.500V37.500M14.500 33.500V37.500M17 33.500V37.500M19.500 33.500V37.500M22 33.500V37.500M24.500 33.500V37.500M27 33.500V37.500M29.500 33.500V37.500M32 33.500V37.500"/></g></svg>
<svg style="left:22px;top:475px;" width="42" height="42" viewBox="0 0 42 42"><path d="M1 7.500H12M6.500 2V13" stroke="#86d4ac" stroke-width="2.600"/><g fill="none" stroke="#86d4ac" stroke-width="1.400" stroke-linejoin="round"><path d="M9.500 17.500H30V38H9.500Z"/><path d="M9.500 17.500L17 10H37.500L30 17.500M37.500 10V30.500L30 38"/></g></svg>
<svg style="left:61.5px;top:510.5px;" width="7" height="7" viewBox="0 0 7 7"><path d="M7 0V7H0Z" fill="#8a8a8a"/></svg>
<span class="t" style="letter-spacing:-0.03px;left:96.4px;top:54.4px;color:#f6f6f6;-webkit-text-stroke:0.35px #f6f6f6;text-shadow:0 0 2px #000,0 1px 2px rgba(0,0,0,0.8)">Left Orthographic</span>
<span class="t" style="letter-spacing:0.21px;left:96.4px;top:80.7px;color:#f6f6f6;-webkit-text-stroke:0.35px #f6f6f6;text-shadow:0 0 2px #000,0 1px 2px rgba(0,0,0,0.8)">(-1) Collection | speed_oz_centerlock</span>
<span class="t" style="letter-spacing:-0.09px;left:96.4px;top:108px;color:#f6f6f6;-webkit-text-stroke:0.35px #f6f6f6;text-shadow:0 0 2px #000,0 1px 2px rgba(0,0,0,0.8)">Centimeters</span>
<svg style="left:0;top:-73px" width="1336" height="1080" viewBox="0 0 1336 1080"><path d="M1259 150V223" stroke="#2f80dc" stroke-width="2"/><path d="M1222 187H1296" stroke="#7ab51d" stroke-width="2"/><circle cx="1259" cy="235" r="11.300" fill="#3c5476" stroke="#2f80dc" stroke-width="1.400"/><circle cx="1307" cy="187" r="11.300" fill="#50672e" stroke="#7ab51d" stroke-width="1.400"/><circle cx="1259" cy="138.800" r="12" fill="#2f80dc"/><circle cx="1210.800" cy="187" r="12" fill="#76b41a"/><circle cx="1259" cy="187" r="12.600" fill="#f53e5f" stroke="#f9a3b2" stroke-width="1"/><g font-family="'DejaVu Sans','Liberation Sans',sans-serif" font-size="14.500" fill="#0c0c0c" text-anchor="middle" font-weight="normal"><text x="1259" y="144">Z</text><text x="1210.800" y="192.300">Y</text><text x="1259.500" y="192.300" font-size="14">-X</text></g></svg>
<div class="a" style="left:1279.5px;top:175.3px;width:41px;height:41px;border-radius:50%;background:rgba(28,28,28,0.45)"></div>
<div class="a" style="left:1279.5px;top:220.3px;width:41px;height:41px;border-radius:50%;background:rgba(28,28,28,0.45)"></div>
<div class="a" style="left:1279.5px;top:265.3px;width:41px;height:41px;border-radius:50%;background:rgba(28,28,28,0.45)"></div>
<div class="a" style="left:1279.5px;top:310.5px;width:41px;height:41px;border-radius:50%;background:rgba(28,28,28,0.45)"></div>
<svg style="left:1286px;top:180px;" width="30" height="30" viewBox="0 0 30 30"><circle cx="16.600" cy="12.900" r="9.300" fill="#e2e2e2"/><path d="M10.500 19.800L4 26.300" stroke="#e2e2e2" stroke-width="3" stroke-linecap="round"/><path d="M12.200 12.900H21M16.600 8.500V17.300" stroke="#2e2e2e" stroke-width="1.500"/></svg>
<svg style="left:1287px;top:227px;" width="27" height="27" viewBox="0 0 27 27"><path d="M9 25.500C6 22 3.500 19 1.300 16.800C0.300 15.300 2 13.600 4 14.800L7.500 17.300L6.300 6.800A1.500 1.500 0 0 1 9.300 6.400L10.800 14L10.800 3.200A1.600 1.600 0 0 1 14 3.200L14.300 13.800L16.300 4.500A1.500 1.500 0 0 1 19.300 5L18 14.800L21.800 9.300A1.400 1.400 0 0 1 24.300 10.600C22 15.500 21.500 21 19 25.500C16 26.500 12 26.500 9 25.500Z" fill="#e2e2e2"/></svg>
<svg style="left:1288px;top:272px;" width="26" height="27" viewBox="0 0 26 27"><g fill="none" stroke="#e2e2e2" stroke-width="1.700" stroke-linejoin="round"><path d="M5.500 12.300A4.600 4.600 0 1 1 9.800 6.200A6 6 0 1 1 16.500 12.300Z"/><rect x="5.500" y="16" width="10.500" height="8.800" rx="1.800"/><path d="M18.500 20.400L24.300 16.800V24.200Z"/><path d="M1.300 17.500V20.500H5"/></g><circle cx="5.800" cy="8" r="1.100" fill="#e2e2e2"/><circle cx="15.800" cy="6.500" r="1.600" fill="none" stroke="#e2e2e2" stroke-width="1.100"/></svg>
<svg style="left:1288px;top:318px;" width="25" height="25" viewBox="0 0 25 25"><g fill="none" stroke="#e2e2e2" stroke-width="1.800"><rect x="1.500" y="1.500" width="22" height="22" rx="1"/><path d="M8.800 1.500V23.500M16.200 1.500V23.500M1.500 8.800H23.500M1.500 16.200H23.500"/></g></svg>
<div class="a" style="left:1320px;top:69.5px;width:16px;height:27px;border-radius:5px 0 0 5px;background:#464646"></div>
<svg style="left:1323px;top:76px;" width="8" height="13" viewBox="0 0 8 13"><path d="M6.500 1.500L1.800 6.500L6.500 11.500" fill="none" stroke="#bdbdbd" stroke-width="1.600" stroke-linecap="round" stroke-linejoin="round"/></svg>
<div class="a" style="left:91.3px;top:854.3px;width:230.500px;height:35.500px;border-radius:5px;background:#181818"></div>
<svg style="left:106px;top:865px;color:#bdbdbd" width="8" height="13" viewBox="0 0 8 13"><use href="#chevr" width="8" height="13"/></svg>
<span class="t" style="letter-spacing:0.87px;left:121.2px;top:864.7px;color:#e0e0e0">Move</span>
</div>
<!-- OUTLINER -->
<div class="area" id="outliner" style="left:1340px;top:73px;width:578px;height:323px;background:#282828">
<div class="a" style="left:0;top:58.25px;width:578px;height:29.15px;background:#2b2b2b"></div>
<div class="a" style="left:0;top:116.55px;width:578px;height:29.15px;background:#2b2b2b"></div>
<div class="a" style="left:0;top:174.85px;width:578px;height:29.15px;background:#2b2b2b"></div>
<div class="a" style="left:0;top:233.15px;width:578px;height:29.15px;background:#2b2b2b"></div>
<div class="a" style="left:0;top:291.45px;width:578px;height:29.15px;background:#2b2b2b"></div>
<div class="a" style="left:43px;top:32px;width:1px;height:290px;background:#464646"></div>
<svg style="left:95px;top:40.675px;" width="14" height="8" viewBox="0 0 14 8"><path d="M0.800 0.800L7 7L13.200 0.800" fill="none" stroke="#c8c8c8" stroke-width="1.500" stroke-linecap="round" stroke-linejoin="round"/></svg>
<svg style="left:121.5px;top:33.875px;opacity:1" width="21.4" height="21.4" viewBox="0 0 22 22"><g fill="none" stroke="#1abf9f" stroke-width="1.500"><path d="M5 3.200H17M3.800 5.500L9.800 16.500M18.200 5.500L12.200 16.500"/><rect x="1" y="1" width="4.600" height="4.600"/><rect x="16.400" y="1" width="4.600" height="4.600"/><rect x="8.700" y="16.400" width="4.600" height="4.600"/></g></svg>
<span class="t" style="letter-spacing:0.46px;left:150.2px;top:36.8px;color:#d4d4d4">chassis_243..005</span>
<svg style="left:150.1px;top:62.925px;" width="21" height="21" viewBox="0 0 21 21"><circle cx="10.500" cy="10.500" r="9.700" fill="#2a2a2a" stroke="#b55c68" stroke-width="1.400"/><path d="M10.500 0.800A9.700 9.700 0 0 1 20.200 10.500Q15.500 13.200 10.800 12.500Q11.500 6 10.500 0.800Z" fill="#b55c68"/><path d="M0.800 10.500Q5.500 13 10.800 12.500Q10.800 17 10.500 20.200A9.700 9.700 0 0 1 0.800 10.500Z" fill="#b55c68"/></svg>
<span class="t" style="letter-spacing:0.83px;left:179.2px;top:65.95px;color:#d4d4d4">J58_Mechanics</span>
<svg style="left:66.1px;top:98.975px;" width="14" height="8" viewBox="0 0 14 8"><path d="M0.800 0.800L7 7L13.200 0.800" fill="none" stroke="#c8c8c8" stroke-width="1.500" stroke-linecap="round" stroke-linejoin="round"/></svg>
<svg style="left:92px;top:92.075px;opacity:1" width="22.2" height="22.2" viewBox="0 0 22.2 22.2"><path d="M2.600 2.600H19.600L11.100 19.400Z" fill="none" stroke="#cb8a52" stroke-width="3.800" stroke-linejoin="round"/></svg>
<span class="t" style="letter-spacing:0.06px;left:121.1px;top:95.1px;color:#d4d4d4">super_radiatorLM</span>
<svg style="left:512.1px;top:95.275px;" width="20.4" height="14" viewBox="0 0 20.4 14"><path d="M0.200 7C3 2.500 6.500 0.300 10.200 0.300S17.400 2.500 20.200 7C17.400 11.500 13.900 13.700 10.200 13.700S3 11.500 0.200 7Z" fill="#ececec"/><circle cx="10.200" cy="7" r="5.200" fill="#2a2a2a"/><circle cx="10.200" cy="7" r="2.400" fill="#ececec"/></svg>
<svg style="left:541.3px;top:94.375px;" width="20.6" height="17.2" viewBox="0 0 20.6 17.2"><path d="M0 3.400H5.600L7.400 0.300H13.200L15 3.400H20.600V17.200H0Z" fill="#e8e8e8"/><circle cx="10.300" cy="9.800" r="5.500" fill="none" stroke="#2a2a2a" stroke-width="1.300"/><circle cx="10.300" cy="9.800" r="2.700" fill="#2a2a2a"/></svg>
<svg style="left:95px;top:128.125px;" width="14" height="8" viewBox="0 0 14 8"><path d="M0.800 0.800L7 7L13.200 0.800" fill="none" stroke="#c8c8c8" stroke-width="1.500" stroke-linecap="round" stroke-linejoin="round"/></svg>
<svg style="left:121.5px;top:121.325px;opacity:1" width="21.4" height="21.4" viewBox="0 0 22 22"><g fill="none" stroke="#1abf9f" stroke-width="1.500"><path d="M5 3.200H17M3.800 5.500L9.800 16.500M18.200 5.500L12.200 16.500"/><rect x="1" y="1" width="4.600" height="4.600"/><rect x="16.400" y="1" width="4.600" height="4.600"/><rect x="8.700" y="16.400" width="4.600" height="4.600"/></g></svg>
<span class="t" style="letter-spacing:0.46px;left:150.2px;top:124.25px;color:#d4d4d4">chassis_243..001</span>
<svg style="left:150.1px;top:150.375px;" width="21" height="21" viewBox="0 0 21 21"><circle cx="10.500" cy="10.500" r="9.700" fill="#2a2a2a" stroke="#b55c68" stroke-width="1.400"/><path d="M10.500 0.800A9.700 9.700 0 0 1 20.200 10.500Q15.500 13.200 10.800 12.500Q11.500 6 10.500 0.800Z" fill="#b55c68"/><path d="M0.800 10.500Q5.500 13 10.800 12.500Q10.800 17 10.500 20.200A9.700 9.700 0 0 1 0.800 10.500Z" fill="#b55c68"/></svg>
<span class="t" style="letter-spacing:0.83px;left:179.2px;top:153.4px;color:#d4d4d4">J58_Mechanics</span>
<svg style="left:70px;top:182.925px;" width="8" height="14" viewBox="0 0 8 14"><path d="M0.800 0.800L7 7L0.800 13.200" fill="none" stroke="#6c6c6c" stroke-width="1.500" stroke-linecap="round" stroke-linejoin="round"/></svg>
<svg style="left:92px;top:179.525px;opacity:0.5" width="22.2" height="22.2" viewBox="0 0 22.2 22.2"><path d="M2.600 2.600H19.600L11.100 19.400Z" fill="none" stroke="#cb8a52" stroke-width="3.800" stroke-linejoin="round"/></svg>
<svg style="left:309.3px;top:178.825px;opacity:0.5" width="21.4" height="21.4" viewBox="0 0 22 22"><g fill="none" stroke="#1abf9f" stroke-width="1.500"><path d="M5 3.200H17M3.800 5.500L9.800 16.500M18.200 5.500L12.200 16.500"/><rect x="1" y="1" width="4.600" height="4.600"/><rect x="16.400" y="1" width="4.600" height="4.600"/><rect x="8.700" y="16.400" width="4.600" height="4.600"/></g></svg>
<span class="t" style="letter-spacing:0.01px;left:121.1px;top:182.55px;color:#787878">super_rightsideskirt</span>
<svg style="left:512.1px;top:188.425px;" width="20.4" height="9" viewBox="0 0 20.4 9"><path d="M0.500 0.500Q10.200 14 19.900 0.500" fill="none" stroke="#a4a4a4" stroke-width="1.300" stroke-linecap="round"/></svg>
<svg style="left:541.3px;top:181.825px;" width="20.6" height="17.2" viewBox="0 0 20.6 17.2"><path d="M0 3.400H5.600L7.400 0.300H13.200L15 3.400H20.600V17.200H0Z" fill="#e8e8e8"/><circle cx="10.300" cy="9.800" r="5.500" fill="none" stroke="#2a2a2a" stroke-width="1.300"/><circle cx="10.300" cy="9.800" r="2.700" fill="#2a2a2a"/></svg>
<svg style="left:70px;top:212.075px;" width="8" height="14" viewBox="0 0 8 14"><path d="M0.800 0.800L7 7L0.800 13.200" fill="none" stroke="#c8c8c8" stroke-width="1.500" stroke-linecap="round" stroke-linejoin="round"/></svg>
<svg style="left:92px;top:208.675px;opacity:1" width="22.2" height="22.2" viewBox="0 0 22.2 22.2"><path d="M2.600 2.600H19.600L11.100 19.400Z" fill="none" stroke="#cb8a52" stroke-width="3.800" stroke-linejoin="round"/></svg>
<svg style="left:332.3px;top:207.975px;opacity:1" width="21.4" height="21.4" viewBox="0 0 22 22"><g fill="none" stroke="#1abf9f" stroke-width="1.500"><path d="M5 3.200H17M3.800 5.500L9.800 16.500M18.200 5.500L12.200 16.500"/><rect x="1" y="1" width="4.600" height="4.600"/><rect x="16.400" y="1" width="4.600" height="4.600"/><rect x="8.700" y="16.400" width="4.600" height="4.600"/></g></svg>
<span class="t" style="letter-spacing:0.08px;left:121.1px;top:211.7px;color:#d4d4d4">super_rightsideskirtLM</span>
<svg style="left:512.1px;top:211.875px;" width="20.4" height="14" viewBox="0 0 20.4 14"><path d="M0.200 7C3 2.500 6.500 0.300 10.200 0.300S17.400 2.500 20.200 7C17.400 11.500 13.900 13.700 10.200 13.700S3 11.500 0.200 7Z" fill="#ececec"/><circle cx="10.200" cy="7" r="5.200" fill="#2a2a2a"/><circle cx="10.200" cy="7" r="2.400" fill="#ececec"/></svg>
<svg style="left:541.3px;top:210.975px;" width="20.6" height="17.2" viewBox="0 0 20.6 17.2"><path d="M0 3.400H5.600L7.400 0.300H13.200L15 3.400H20.600V17.200H0Z" fill="#e8e8e8"/><circle cx="10.300" cy="9.800" r="5.500" fill="none" stroke="#2a2a2a" stroke-width="1.300"/><circle cx="10.300" cy="9.800" r="2.700" fill="#2a2a2a"/></svg>
<svg style="left:70px;top:241.225px;" width="8" height="14" viewBox="0 0 8 14"><path d="M0.800 0.800L7 7L0.800 13.200" fill="none" stroke="#c8c8c8" stroke-width="1.500" stroke-linecap="round" stroke-linejoin="round"/></svg>
<svg style="left:92px;top:237.825px;opacity:1" width="22.2" height="22.2" viewBox="0 0 22.2 22.2"><path d="M2.600 2.600H19.600L11.100 19.400Z" fill="none" stroke="#cb8a52" stroke-width="3.800" stroke-linejoin="round"/></svg>
<svg style="left:269.3px;top:237.125px;opacity:1" width="21.4" height="21.4" viewBox="0 0 22 22"><g fill="none" stroke="#1abf9f" stroke-width="1.500"><path d="M5 3.200H17M3.800 5.500L9.800 16.500M18.200 5.500L12.200 16.500"/><rect x="1" y="1" width="4.600" height="4.600"/><rect x="16.400" y="1" width="4.600" height="4.600"/><rect x="8.700" y="16.400" width="4.600" height="4.600"/></g></svg>
<span class="t" style="letter-spacing:0.12px;left:121.1px;top:240.85px;color:#d4d4d4">super_rollcage</span>
<svg style="left:512.1px;top:241.025px;" width="20.4" height="14" viewBox="0 0 20.4 14"><path d="M0.200 7C3 2.500 6.500 0.300 10.200 0.300S17.400 2.500 20.200 7C17.400 11.500 13.900 13.700 10.200 13.700S3 11.500 0.200 7Z" fill="#ececec"/><circle cx="10.200" cy="7" r="5.200" fill="#2a2a2a"/><circle cx="10.200" cy="7" r="2.400" fill="#ececec"/></svg>
<svg style="left:541.3px;top:240.125px;" width="20.6" height="17.2" viewBox="0 0 20.6 17.2"><path d="M0 3.400H5.600L7.400 0.300H13.200L15 3.400H20.600V17.200H0Z" fill="#e8e8e8"/><circle cx="10.300" cy="9.800" r="5.500" fill="none" stroke="#2a2a2a" stroke-width="1.300"/><circle cx="10.300" cy="9.800" r="2.700" fill="#2a2a2a"/></svg>
<svg style="left:70px;top:270.375px;" width="8" height="14" viewBox="0 0 8 14"><path d="M0.800 0.800L7 7L0.800 13.200" fill="none" stroke="#6c6c6c" stroke-width="1.500" stroke-linecap="round" stroke-linejoin="round"/></svg>
<svg style="left:92px;top:266.975px;opacity:0.5" width="22.2" height="22.2" viewBox="0 0 22.2 22.2"><path d="M2.600 2.600H19.600L11.100 19.400Z" fill="none" stroke="#cb8a52" stroke-width="3.800" stroke-linejoin="round"/></svg>
<svg style="left:257.3px;top:266.275px;opacity:0.5" width="21.4" height="21.4" viewBox="0 0 22 22"><g fill="none" stroke="#1abf9f" stroke-width="1.500"><path d="M5 3.200H17M3.800 5.500L9.800 16.500M18.200 5.500L12.200 16.500"/><rect x="1" y="1" width="4.600" height="4.600"/><rect x="16.400" y="1" width="4.600" height="4.600"/><rect x="8.700" y="16.400" width="4.600" height="4.600"/></g></svg>
<span class="t" style="letter-spacing:0.2px;left:121.1px;top:270px;color:#787878">super_seat_L</span>
<svg style="left:512.1px;top:275.875px;" width="20.4" height="9" viewBox="0 0 20.4 9"><path d="M0.500 0.500Q10.200 14 19.900 0.500" fill="none" stroke="#a4a4a4" stroke-width="1.300" stroke-linecap="round"/></svg>
<svg style="left:541.3px;top:269.275px;" width="20.6" height="17.2" viewBox="0 0 20.6 17.2"><path d="M0 3.400H5.600L7.400 0.300H13.200L15 3.400H20.600V17.200H0Z" fill="#e8e8e8"/><circle cx="10.300" cy="9.800" r="5.500" fill="none" stroke="#2a2a2a" stroke-width="1.300"/><circle cx="10.300" cy="9.800" r="2.700" fill="#2a2a2a"/></svg>
<svg style="left:70px;top:299.525px;" width="8" height="14" viewBox="0 0 8 14"><path d="M0.800 0.800L7 7L0.800 13.200" fill="none" stroke="#6c6c6c" stroke-width="1.500" stroke-linecap="round" stroke-linejoin="round"/></svg>
<svg style="left:92px;top:296.125px;opacity:0.5" width="22.2" height="22.2" viewBox="0 0 22.2 22.2"><path d="M2.600 2.600H19.600L11.100 19.400Z" fill="none" stroke="#cb8a52" stroke-width="3.800" stroke-linejoin="round"/></svg>
<svg style="left:259.3px;top:295.425px;opacity:0.5" width="21.4" height="21.4" viewBox="0 0 22 22"><g fill="none" stroke="#1abf9f" stroke-width="1.500"><path d="M5 3.200H17M3.800 5.500L9.800 16.500M18.200 5.500L12.200 16.500"/><rect x="1" y="1" width="4.600" height="4.600"/><rect x="16.400" y="1" width="4.600" height="4.600"/><rect x="8.700" y="16.400" width="4.600" height="4.600"/></g></svg>
<span class="t" style="letter-spacing:0.13px;left:121.1px;top:299.15px;color:#787878">super_seat_R</span>
<svg style="left:512.1px;top:305.025px;" width="20.4" height="9" viewBox="0 0 20.4 9"><path d="M0.500 0.500Q10.200 14 19.900 0.500" fill="none" stroke="#a4a4a4" stroke-width="1.300" stroke-linecap="round"/></svg>
<svg style="left:541.3px;top:298.425px;" width="20.6" height="17.2" viewBox="0 0 20.6 17.2"><path d="M0 3.400H5.600L7.400 0.300H13.200L15 3.400H20.600V17.200H0Z" fill="#e8e8e8"/><circle cx="10.300" cy="9.800" r="5.500" fill="none" stroke="#2a2a2a" stroke-width="1.300"/><circle cx="10.300" cy="9.800" r="2.700" fill="#2a2a2a"/></svg>
<div class="a" style="left:571.3px;top:201.5px;width:5.500px;height:42px;border-radius:3px;background:#4f4f4f"></div>
<div class="a" style="left:0;top:0;width:578px;height:37.500px;background:#282828"></div>
<div class="a" style="left:12px;top:4.5px;width:45.7px;height:28px;background:#282828;border:1px solid #3c3c3c;border-radius:5px"></div>
<div class="a" style="left:65.4px;top:4.5px;width:45.2px;height:28px;background:#282828;border:1px solid #3c3c3c;border-radius:5px"></div>
<div class="a" style="left:188px;top:4.5px;width:173.8px;height:28px;background:#1d1d1d;border:1px solid #3c3c3c;border-radius:5px"></div>
<div class="a" style="left:486px;top:4.5px;width:45px;height:28px;background:#282828;border:1px solid #3c3c3c;border-radius:5px"></div>
<div class="a" style="left:539.6px;top:4.5px;width:27.9px;height:28px;background:#545454;border:1px solid #545454;border-radius:5px"></div>
<svg style="left:18px;top:8px;" width="22" height="22" viewBox="0 0 22 22"><g fill="#dcdcdc"><rect x="1" y="1.500" width="7" height="4.500" rx="0.800"/><rect x="9" y="9" width="11.500" height="4.500" rx="0.800"/><rect x="9" y="16.500" width="11.500" height="4.500" rx="0.800"/></g><path d="M3.500 6V18.800H9M3.500 11.200H9" fill="none" stroke="#dcdcdc" stroke-width="1.300"/></svg>
<svg style="left:43px;top:15.5px;color:#d6d6d6;opacity:1" width="10" height="7" viewBox="0 0 10 7"><use href="#chev" width="10" height="7"/></svg>
<svg style="left:71px;top:7.3px;color:#d6d6d6;opacity:1" width="23" height="23" viewBox="0 0 23 23"><use href="#i-layers" width="23" height="23"/></svg>
<svg style="left:96px;top:15.5px;color:#d6d6d6;opacity:1" width="10" height="7" viewBox="0 0 10 7"><use href="#chev" width="10" height="7"/></svg>
<svg style="left:195px;top:8px;" width="22" height="22" viewBox="0 0 22 22"><circle cx="13.500" cy="8.500" r="6.300" fill="none" stroke="#dcdcdc" stroke-width="1.600"/><path d="M9.300 13L2 20.500" stroke="#dcdcdc" stroke-width="1.800" stroke-linecap="round"/></svg>
<span class="t" style="letter-spacing:0.28px;left:226.6px;top:9.4px;color:#7a7a7a">Search</span>
<svg style="left:492px;top:8px;" width="22" height="22" viewBox="0 0 22 22"><path d="M1.500 2H20.500L13 11V19L9 21.500V11Z" fill="none" stroke="#dcdcdc" stroke-width="1.600" stroke-linejoin="round"/></svg>
<svg style="left:516px;top:15.5px;color:#d6d6d6;opacity:1" width="10" height="7" viewBox="0 0 10 7"><use href="#chev" width="10" height="7"/></svg>
<svg style="left:543px;top:7px;" width="22" height="24" viewBox="0 0 22 24"><g fill="none" stroke="#9c9c9c" stroke-width="1.500"><path d="M1.500 7.500H12M1.500 7.500V11H16.500"/><path d="M3 11V21.500H15V12"/><path d="M7 15H11" stroke-width="1.800"/></g><circle cx="16.500" cy="6.500" r="5.600" fill="#f0f0f0"/><path d="M13.500 6.500H19.500M16.500 3.500V9.500" stroke="#545454" stroke-width="1.500"/></svg>
</div>
<!-- PROPERTIES -->
<div class="area" id="props" style="left:1340px;top:401px;width:578px;height:569px;background:#303030">
<div class="a" style="left:0px;top:37.7px;width:44px;height:532.3px;background:#1e1e1e;border-radius:0;"></div>
<div class="a" style="left:55px;top:29px;width:512px;height:432.3px;background:#3c3c3c;border-radius:0 0 6px 6px;"></div>
<div class="a" style="left:55px;top:464.4px;width:512px;height:35.4px;background:#3c3c3c;border-radius:6px;"></div>
<div class="a" style="left:55px;top:502.6px;width:512px;height:35.1px;background:#3c3c3c;border-radius:6px;"></div>
<div class="a" style="left:55px;top:540.8px;width:512px;height:38.2px;background:#3c3c3c;border-radius:6px 6px 0 0;"></div>
<div class="a" style="left:258px;top:75.2px;width:238.2px;height:27.7px;background:#545454;border-radius:4px 0 0 0;"></div><div class="a" style="left:258px;top:104.07px;width:238.2px;height:27.7px;background:#545454;border-radius:0;"></div><div class="a" style="left:258px;top:132.94px;width:238.2px;height:27.7px;background:#545454;border-radius:0 0 0 4px;"></div>
<div class="a" style="left:258px;top:169px;width:238.2px;height:27.7px;background:#545454;border-radius:4px 0 0 0;"></div><div class="a" style="left:258px;top:197.87px;width:238.2px;height:27.7px;background:#545454;border-radius:0;"></div><div class="a" style="left:258px;top:226.74px;width:238.2px;height:27.7px;background:#545454;border-radius:0;"></div><div class="a" style="left:258px;top:255.61px;width:238.2px;height:27.7px;background:#545454;border-radius:0 0 0 4px;"></div>
<div class="a" style="left:258px;top:292px;width:238.2px;height:27px;background:#222;border-radius:4px;border:1px solid #3a3a3a"></div>
<div class="a" style="left:258px;top:328.4px;width:238.2px;height:27.7px;background:#545454;border-radius:4px 0 0 0;"></div><div class="a" style="left:258px;top:357.27px;width:238.2px;height:27.7px;background:#545454;border-radius:0;"></div><div class="a" style="left:258px;top:386.14px;width:238.2px;height:27.7px;background:#545454;border-radius:0 0 0 4px;"></div>
<span class="t" style="letter-spacing:0.0px;left:162.382px;top:78.95px;color:#e2e2e2">Location X</span><span class="t" style="letter-spacing:0.03px;left:361.4px;top:78.95px;color:#e8e8e8">0 m</span><svg style="left:500px;top:80.35px;" width="23" height="18" viewBox="0 0 23 18"><g fill="none" stroke="#b4b4b4" stroke-width="1.300"><path d="M1 9V5.800A4.800 4.800 0 0 1 10.600 5.800V8.500"/><rect x="8.300" y="8.700" width="13" height="8.300"/><path d="M14.800 11.500V14.500" stroke-width="1.800"/></g></svg><div class="a" style="left:537.2px;top:85.75px;width:6.600px;height:6.600px;border-radius:50%;background:#e4e4e4"></div>
<span class="t" style="letter-spacing:0px;left:232.675px;top:107.82px;color:#e2e2e2">Y</span><span class="t" style="letter-spacing:0.03px;left:361.4px;top:107.82px;color:#e8e8e8">0 m</span><svg style="left:500px;top:109.22px;" width="23" height="18" viewBox="0 0 23 18"><g fill="none" stroke="#b4b4b4" stroke-width="1.300"><path d="M1 9V5.800A4.800 4.800 0 0 1 10.600 5.800V8.500"/><rect x="8.300" y="8.700" width="13" height="8.300"/><path d="M14.800 11.500V14.500" stroke-width="1.800"/></g></svg><div class="a" style="left:537.2px;top:114.62px;width:6.600px;height:6.600px;border-radius:50%;background:#e4e4e4"></div>
<span class="t" style="letter-spacing:0px;left:233.592px;top:136.69px;color:#e2e2e2">Z</span><span class="t" style="letter-spacing:0.87px;left:328.1px;top:136.69px;color:#e8e8e8">-0.30032 m</span><svg style="left:500px;top:138.09px;" width="23" height="18" viewBox="0 0 23 18"><g fill="none" stroke="#b4b4b4" stroke-width="1.300"><path d="M1 9V5.800A4.800 4.800 0 0 1 10.600 5.800V8.500"/><rect x="8.300" y="8.700" width="13" height="8.300"/><path d="M14.800 11.500V14.500" stroke-width="1.800"/></g></svg><div class="a" style="left:537.2px;top:143.49px;width:6.600px;height:6.600px;border-radius:50%;background:#e4e4e4"></div>
<span class="t" style="letter-spacing:-0.1px;left:159.325px;top:172.75px;color:#e2e2e2">Rotation W</span><span class="t" style="letter-spacing:0.64px;left:352.2px;top:172.75px;color:#e8e8e8">1.000</span><svg style="left:500px;top:174.15px;" width="23" height="18" viewBox="0 0 23 18"><g fill="none" stroke="#b4b4b4" stroke-width="1.300"><path d="M1 9V5.800A4.800 4.800 0 0 1 10.600 5.800V8.500"/><rect x="8.300" y="8.700" width="13" height="8.300"/><path d="M14.800 11.500V14.500" stroke-width="1.800"/></g></svg><div class="a" style="left:537.2px;top:179.55px;width:6.600px;height:6.600px;border-radius:50%;background:#e4e4e4"></div>
<span class="t" style="letter-spacing:0px;left:232.675px;top:201.62px;color:#e2e2e2">X</span><span class="t" style="letter-spacing:0.77px;left:351.7px;top:201.62px;color:#e8e8e8">0.000</span><svg style="left:500px;top:203.02px;" width="23" height="18" viewBox="0 0 23 18"><g fill="none" stroke="#b4b4b4" stroke-width="1.300"><path d="M1 9V5.800A4.800 4.800 0 0 1 10.600 5.800V8.500"/><rect x="8.300" y="8.700" width="13" height="8.300"/><path d="M14.800 11.500V14.500" stroke-width="1.800"/></g></svg><div class="a" style="left:537.2px;top:208.42px;width:6.600px;height:6.600px;border-radius:50%;background:#e4e4e4"></div>
<span class="t" style="letter-spacing:0px;left:232.675px;top:230.49px;color:#e2e2e2">Y</span><span class="t" style="letter-spacing:0.77px;left:351.7px;top:230.49px;color:#e8e8e8">0.000</span><svg style="left:500px;top:231.89px;" width="23" height="18" viewBox="0 0 23 18"><g fill="none" stroke="#b4b4b4" stroke-width="1.300"><path d="M1 9V5.800A4.800 4.800 0 0 1 10.600 5.800V8.500"/><rect x="8.300" y="8.700" width="13" height="8.300"/><path d="M14.800 11.500V14.500" stroke-width="1.800"/></g></svg><div class="a" style="left:537.2px;top:237.29px;width:6.600px;height:6.600px;border-radius:50%;background:#e4e4e4"></div>
<span class="t" style="letter-spacing:0px;left:233.592px;top:259.36px;color:#e2e2e2">Z</span><span class="t" style="letter-spacing:0.77px;left:351.7px;top:259.36px;color:#e8e8e8">0.000</span><svg style="left:500px;top:260.76px;" width="23" height="18" viewBox="0 0 23 18"><g fill="none" stroke="#b4b4b4" stroke-width="1.300"><path d="M1 9V5.800A4.800 4.800 0 0 1 10.600 5.800V8.500"/><rect x="8.300" y="8.700" width="13" height="8.300"/><path d="M14.800 11.500V14.500" stroke-width="1.800"/></g></svg><div class="a" style="left:537.2px;top:266.16px;width:6.600px;height:6.600px;border-radius:50%;background:#e4e4e4"></div>
<span class="t" style="letter-spacing:1.0px;left:198.751px;top:295.4px;color:#e2e2e2">Mode</span><span class="t" style="letter-spacing:0.01px;left:268.433px;top:295.4px;color:#e8e8e8">Quaternion (WXYZ)</span><div class="a" style="left:537.2px;top:302.2px;width:6.600px;height:6.600px;border-radius:50%;background:#e4e4e4"></div>
<svg style="left:481.5px;top:302.5px;color:#e0e0e0;opacity:1" width="10" height="7" viewBox="0 0 10 7"><use href="#chev" width="10" height="7"/></svg>
<span class="t" style="letter-spacing:0.21px;left:185.303px;top:332.15px;color:#e2e2e2">Scale X</span><span class="t" style="letter-spacing:0.64px;left:352.2px;top:332.15px;color:#e8e8e8">1.000</span><svg style="left:500px;top:333.55px;" width="23" height="18" viewBox="0 0 23 18"><g fill="none" stroke="#b4b4b4" stroke-width="1.300"><path d="M1 9V5.800A4.800 4.800 0 0 1 10.600 5.800V8.500"/><rect x="8.300" y="8.700" width="13" height="8.300"/><path d="M14.800 11.500V14.500" stroke-width="1.800"/></g></svg><div class="a" style="left:537.2px;top:338.95px;width:6.600px;height:6.600px;border-radius:50%;background:#e4e4e4"></div>
<span class="t" style="letter-spacing:0px;left:232.675px;top:361.02px;color:#e2e2e2">Y</span><span class="t" style="letter-spacing:0.64px;left:352.2px;top:361.02px;color:#e8e8e8">1.000</span><svg style="left:500px;top:362.42px;" width="23" height="18" viewBox="0 0 23 18"><g fill="none" stroke="#b4b4b4" stroke-width="1.300"><path d="M1 9V5.800A4.800 4.800 0 0 1 10.600 5.800V8.500"/><rect x="8.300" y="8.700" width="13" height="8.300"/><path d="M14.800 11.500V14.500" stroke-width="1.800"/></g></svg><div class="a" style="left:537.2px;top:367.82px;width:6.600px;height:6.600px;border-radius:50%;background:#e4e4e4"></div>
<span class="t" style="letter-spacing:0px;left:233.592px;top:389.89px;color:#e2e2e2">Z</span><span class="t" style="letter-spacing:0.64px;left:352.2px;top:389.89px;color:#e8e8e8">1.000</span><svg style="left:500px;top:391.29px;" width="23" height="18" viewBox="0 0 23 18"><g fill="none" stroke="#b4b4b4" stroke-width="1.300"><path d="M1 9V5.800A4.800 4.800 0 0 1 10.600 5.800V8.500"/><rect x="8.300" y="8.700" width="13" height="8.300"/><path d="M14.800 11.500V14.500" stroke-width="1.800"/></g></svg><div class="a" style="left:537.2px;top:396.69px;width:6.600px;height:6.600px;border-radius:50%;background:#e4e4e4"></div>
<svg style="left:67.5px;top:41.7px;" width="13" height="7.6" viewBox="0 0 13 7.6"><path d="M0.800 0.800L6.500 6.500L12.200 0.800" fill="none" stroke="#d0d0d0" stroke-width="1.500" stroke-linecap="round" stroke-linejoin="round"/></svg><span class="t" style="letter-spacing:0.43px;left:85.9758px;top:36px;color:#e6e6e6">Transform</span>
<svg style="left:537px;top:41px;" width="16" height="7" viewBox="0 0 16 7"><g fill="#7a7a7a"><rect x="0" y="0" width="1.300" height="1.300"/><rect x="0" y="4.7" width="1.300" height="1.300"/><rect x="4.7" y="0" width="1.300" height="1.300"/><rect x="4.7" y="4.7" width="1.300" height="1.300"/><rect x="9.4" y="0" width="1.300" height="1.300"/><rect x="9.4" y="4.7" width="1.300" height="1.300"/><rect x="14.1" y="0" width="1.300" height="1.300"/><rect x="14.1" y="4.7" width="1.300" height="1.300"/></g></svg>
<svg style="left:90.2px;top:438.3px;" width="7.6" height="13" viewBox="0 0 7.6 13"><path d="M0.800 0.800L6.500 6.500L0.800 12.200" fill="none" stroke="#d0d0d0" stroke-width="1.500" stroke-linecap="round" stroke-linejoin="round"/></svg><span class="t" style="letter-spacing:0.13px;left:104.924px;top:435.8px;color:#e6e6e6">Delta Transform</span>
<svg style="left:70.7px;top:476.5px;" width="7.6" height="13" viewBox="0 0 7.6 13"><path d="M0.800 0.800L6.500 6.500L0.800 12.200" fill="none" stroke="#d0d0d0" stroke-width="1.500" stroke-linecap="round" stroke-linejoin="round"/></svg><span class="t" style="letter-spacing:0.11px;left:85.0589px;top:474px;color:#e6e6e6">Relations</span>
<svg style="left:537px;top:479.5px;" width="16" height="7" viewBox="0 0 16 7"><g fill="#7a7a7a"><rect x="0" y="0" width="1.300" height="1.300"/><rect x="0" y="4.7" width="1.300" height="1.300"/><rect x="4.7" y="0" width="1.300" height="1.300"/><rect x="4.7" y="4.7" width="1.300" height="1.300"/><rect x="9.4" y="0" width="1.300" height="1.300"/><rect x="9.4" y="4.7" width="1.300" height="1.300"/><rect x="14.1" y="0" width="1.300" height="1.300"/><rect x="14.1" y="4.7" width="1.300" height="1.300"/></g></svg>
<svg style="left:70.7px;top:514.5px;" width="7.6" height="13" viewBox="0 0 7.6 13"><path d="M0.800 0.800L6.500 6.500L0.800 12.200" fill="none" stroke="#d0d0d0" stroke-width="1.500" stroke-linecap="round" stroke-linejoin="round"/></svg><span class="t" style="letter-spacing:0.24px;left:85.0589px;top:512px;color:#e6e6e6">Collections</span>
<svg style="left:537px;top:517.5px;" width="16" height="7" viewBox="0 0 16 7"><g fill="#7a7a7a"><rect x="0" y="0" width="1.300" height="1.300"/><rect x="0" y="4.7" width="1.300" height="1.300"/><rect x="4.7" y="0" width="1.300" height="1.300"/><rect x="4.7" y="4.7" width="1.300" height="1.300"/><rect x="9.4" y="0" width="1.300" height="1.300"/><rect x="9.4" y="4.7" width="1.300" height="1.300"/><rect x="14.1" y="0" width="1.300" height="1.300"/><rect x="14.1" y="4.7" width="1.300" height="1.300"/></g></svg>
<svg style="left:70.7px;top:552.2px;" width="7.6" height="13" viewBox="0 0 7.6 13"><path d="M0.800 0.800L6.500 6.500L0.800 12.200" fill="none" stroke="#d0d0d0" stroke-width="1.500" stroke-linecap="round" stroke-linejoin="round"/></svg><span class="t" style="letter-spacing:0.35px;left:85.0589px;top:549.7px;color:#e6e6e6">Instancing</span>
<svg style="left:537px;top:554.5px;" width="16" height="7" viewBox="0 0 16 7"><g fill="#7a7a7a"><rect x="0" y="0" width="1.300" height="1.300"/><rect x="0" y="4.7" width="1.300" height="1.300"/><rect x="4.7" y="0" width="1.300" height="1.300"/><rect x="4.7" y="4.7" width="1.300" height="1.300"/><rect x="9.4" y="0" width="1.300" height="1.300"/><rect x="9.4" y="4.7" width="1.300" height="1.300"/><rect x="14.1" y="0" width="1.300" height="1.300"/><rect x="14.1" y="4.7" width="1.300" height="1.300"/></g></svg>
<div class="a" style="left:571.3px;top:108.6px;width:5.5px;height:289.4px;background:#4a4a4a;border-radius:3px;"></div>
<div class="a" style="left:0px;top:0px;width:578px;height:37.7px;background:#303030;border-radius:0;"></div>
<div class="a" style="left:11.3px;top:5.3px;width:45.2px;height:27.8px;background:#282828;border:1px solid #3c3c3c;border-radius:5px"></div>
<div class="a" style="left:206.9px;top:5.3px;width:172.7px;height:27.8px;background:#1d1d1d;border:1px solid #3c3c3c;border-radius:5px"></div>
<div class="a" style="left:539.4px;top:5.3px;width:28.1px;height:27.8px;background:#282828;border:1px solid #3c3c3c;border-radius:5px"></div>
<svg style="left:17.5px;top:9px;" width="23" height="23" viewBox="0 0 23 23"><g fill="none" stroke="#dcdcdc" stroke-width="1.300"><rect x="1.300" y="1.300" width="20" height="7.800" rx="3.900"/><rect x="1.300" y="12.900" width="20" height="7.800" rx="3.900"/></g><path d="M5.200 1.300H10.500V9.100H5.200A3.900 3.900 0 0 1 5.200 1.300Z" fill="#dcdcdc"/><path d="M5.200 12.900H14.300V20.700H5.200A3.900 3.900 0 0 1 5.200 12.900Z" fill="#dcdcdc"/></svg>
<svg style="left:42.5px;top:16px;color:#d6d6d6;opacity:1" width="10" height="7" viewBox="0 0 10 7"><use href="#chev" width="10" height="7"/></svg>
<svg style="left:213.5px;top:8.5px;" width="22" height="22" viewBox="0 0 22 22"><circle cx="13.500" cy="8.500" r="6.300" fill="none" stroke="#dcdcdc" stroke-width="1.600"/><path d="M9.300 13L2 20.500" stroke="#dcdcdc" stroke-width="1.800" stroke-linecap="round"/></svg>
<span class="t" style="letter-spacing:0.32px;left:244.6px;top:10.1px;color:#7a7a7a">Search</span>
<svg style="left:548px;top:16px;color:#d6d6d6;opacity:1" width="11" height="7.5" viewBox="0 0 11 7.5"><use href="#chev" width="11" height="7.5"/></svg>
<div class="a" style="left:5.8px;top:268px;width:38.2px;height:37.7px;background:#303030;border-radius:5px 0 0 5px;"></div>
<svg style="left:13px;top:51px;" width="24" height="24" viewBox="0 0 24 24"><path d="M1.200 12.500V4.500A3 3 0 0 1 4.200 1.500H19.800A3 3 0 0 1 22.800 4.500V12.500H20V9H4V12.500Z" fill="#a4a4a4"/><rect x="5.800" y="9.800" width="12.400" height="13.200" fill="#8a8a8a"/><path d="M7.800 21L11.300 15.200L14.800 21Z" fill="#1e1e1e"/><circle cx="15.300" cy="13.300" r="1.300" fill="#1e1e1e"/></svg>
<svg style="left:13px;top:90.5px;" width="24" height="24" viewBox="0 0 24 24"><path d="M8 2.500H21.500V16H8Z" fill="none" stroke="#b4b4b4" stroke-width="1.600"/><path d="M9.500 14.500L13.500 8L16.500 12L18 10.500L20.500 14.500Z" fill="#b4b4b4"/><circle cx="18" cy="6" r="1.300" fill="#b4b4b4"/><path d="M5.200 5.500V18.800H18.500M2.500 8.500V21.500H15.500" fill="none" stroke="#b4b4b4" stroke-width="1.400"/></svg>
<svg style="left:13px;top:130.8px;color:#b4b4b4" width="24" height="24" viewBox="0 0 24 24"><use href="#i-scene" width="24" height="24"/></svg>
<svg style="left:13px;top:170.9px;" width="24" height="24" viewBox="0 0 24 24"><circle cx="11.500" cy="12.500" r="9" fill="none" stroke="#c25a68" stroke-width="1.600"/><path d="M5.500 8.500C7 6.500 9.500 6 11 7.500C12.500 9 11 10.500 12.500 11.500C14 12.500 14.500 14 13 15C11.500 16 10.500 14.500 9 14C7 13.500 5 12 5.500 8.500Z" fill="#c25a68"/><path d="M14 16.500C15.500 15.500 17.500 16 17.500 17.500C17.500 19 15.500 20 14 19.500C12.800 19 12.800 17.500 14 16.500Z" fill="#c25a68"/><path d="M15 5.500C16.500 5.500 18 7 18.500 8.500C17 9 15 8 15 5.500Z" fill="#c25a68"/><path d="M2 22.500L22.500 2" stroke="#1e1e1e" stroke-width="4"/><path d="M2 22.500L22.500 2" stroke="#c25a68" stroke-width="1.500"/></svg>
<svg style="left:13px;top:223.4px;" width="24" height="24" viewBox="0 0 24 24"><g fill="none" stroke="#e4e4e4" stroke-width="1.700"><rect x="2.500" y="3" width="19" height="4.500"/><path d="M4 7.500V21H20V7.500"/><path d="M9.500 12.500H14.500" stroke-width="2.200" stroke-linecap="round"/></g></svg>
<svg style="left:13px;top:274.8px;" width="24" height="24" viewBox="0 0 24 24"><path d="M2 7V2H7M17 2H22V7M22 17V22H17M7 22H2V17" fill="none" stroke="#b87a42" stroke-width="1.500"/><rect x="6" y="6" width="12" height="12" fill="#e8964a"/></svg>
<svg style="left:13px;top:314.8px;" width="24" height="24" viewBox="0 0 24 24"><path d="M21.500 7.500A6 6 0 0 1 13.500 13L6 21A2.300 2.300 0 0 1 2.600 17.600L10.600 10A6 6 0 0 1 16.500 2L13.500 5.500L14.500 9L18 10Z" fill="#5884cf"/></svg>
<svg style="left:13px;top:355.5px;" width="24" height="24" viewBox="0 0 24 24"><g stroke="#5884cf" stroke-width="1.500" fill="none"><path d="M5 6H19.500M5 6V20M5 6L19 19.500"/></g><circle cx="5" cy="6" r="3.400" fill="#5884cf"/><circle cx="20" cy="6" r="2" fill="#5884cf"/><circle cx="5" cy="20.500" r="2" fill="#5884cf"/><circle cx="19.500" cy="20" r="2.400" fill="#5884cf"/></svg>
<svg style="left:13px;top:395.2px;" width="24" height="24" viewBox="0 0 24 24"><path d="M19.500 17.500A9 9 0 1 1 18.500 5.500" fill="none" stroke="#5884cf" stroke-width="1.700"/><circle cx="12" cy="12" r="4" fill="#5884cf"/><circle cx="20.500" cy="4.500" r="2.300" fill="#5884cf"/></svg>
<svg style="left:13px;top:435px;" width="24" height="24" viewBox="0 0 24 24"><g fill="none" stroke="#5884cf" stroke-width="1.700"><path d="M13.500 5.500L19 3A2.700 2.700 0 0 1 21.500 6.500L18.500 13A9 9 0 0 1 8 21.500A6.500 6.500 0 0 1 2.500 14.500A9 9 0 0 1 13.500 5.500Z"/><circle cx="9.500" cy="14.500" r="3.600"/></g><circle cx="9.500" cy="14.500" r="1.400" fill="#5884cf"/></svg>
<svg style="left:14.5px;top:476.5px;" width="21" height="21" viewBox="0 0 24 24"><g fill="none" stroke="#1abf9f" stroke-width="1.700"><path d="M5.500 3.700H18.500M4.200 6L10.800 18M19.800 6L13.200 18"/><rect x="1.200" y="1.200" width="5" height="5"/><rect x="17.800" y="1.200" width="5" height="5"/><rect x="9.500" y="17.800" width="5" height="5"/></g></svg>
<svg style="left:13px;top:515.3px;" width="24" height="24" viewBox="0 0 24 24"><circle cx="12" cy="12" r="10" fill="#1e1e1e" stroke="#b55c68" stroke-width="1.400"/><path d="M12 2A10 10 0 0 1 22 12Q17 14.800 12.300 14Q13 7.500 12 2Z" fill="#b55c68"/><path d="M2 12Q7 14.500 12.300 14Q12.300 18.500 12 22A10 10 0 0 1 2 12Z" fill="#b55c68"/></svg>
<div class="a" style="left:9px;top:203.5px;width:35px;height:1px;background:#1a1a1a;border-radius:0;"></div>
<div class="a" style="left:9px;top:256.5px;width:35px;height:1px;background:#1a1a1a;border-radius:0;"></div>
<div class="a" style="left:9px;top:547.5px;width:35px;height:1px;background:#1a1a1a;border-radius:0;"></div>
</div>
<!-- TIMELINE -->
<div class="area" id="timeline" style="left:1px;top:976px;width:1231px;height:71px;background:#1d1d1d">
<div class="a" style="left:0px;top:0px;width:1231px;height:37px;background:#2e2e2e;border-radius:0;"></div>
<div class="a" style="left:10.7px;top:5px;width:45px;height:27.3px;border-radius:5px;overflow:hidden;box-shadow:0 0 0 1px #3c3c3c"><div class="a" style="left:0px;top:0;width:45px;height:100%;background:#282828"></div></div>
<div class="a" style="left:63.3px;top:5px;width:196.4px;height:27.3px;border-radius:5px;overflow:hidden;box-shadow:0 0 0 1px #3c3c3c"><div class="a" style="left:0px;top:0;width:104.7px;height:100%;background:#282828"></div><div class="a" style="left:105.7px;top:0;width:90.7px;height:100%;background:#282828"></div></div>
<div class="a" style="left:168px;top:5px;width:1px;height:27.3px;background:#3c3c3c;border-radius:0;"></div>
<div class="a" style="left:481.7px;top:5px;width:56.3px;height:27.3px;border-radius:5px;overflow:hidden;"><div class="a" style="left:0px;top:0;width:28px;height:100%;background:#545454"></div><div class="a" style="left:28px;top:0;width:28.3px;height:100%;background:#2c2c2c"></div></div>
<div class="a" style="left:546.7px;top:5px;width:172.3px;height:27.3px;border-radius:5px;overflow:hidden;"><div class="a" style="left:0.1px;top:0;width:26.7px;height:100%;background:#545454"></div><div class="a" style="left:27.8px;top:0;width:28px;height:100%;background:#545454"></div><div class="a" style="left:56.8px;top:0;width:28px;height:100%;background:#545454"></div><div class="a" style="left:85.8px;top:0;width:28px;height:100%;background:#545454"></div><div class="a" style="left:114.8px;top:0;width:28.2px;height:100%;background:#545454"></div><div class="a" style="left:144px;top:0;width:27.3px;height:100%;background:#545454"></div></div>
<div class="a" style="left:824px;top:5px;width:106px;height:27.3px;border-radius:5px;overflow:hidden;"><div class="a" style="left:0px;top:0;width:106px;height:100%;background:#545454"></div></div>
<div class="a" style="left:938.3px;top:5px;width:281.4px;height:27.3px;border-radius:5px;overflow:hidden;"><div class="a" style="left:0px;top:0;width:27.7px;height:100%;background:#545454"></div><div class="a" style="left:28.7px;top:0;width:128px;height:100%;background:#545454"></div><div class="a" style="left:157.7px;top:0;width:123.7px;height:100%;background:#545454"></div></div>
<span class="t" style="letter-spacing:0.04px;left:73.9px;top:9.4px;color:#e4e4e4">Playback</span>
<svg style="left:154px;top:15.5px;color:#d6d6d6" width="10" height="7" viewBox="0 0 10 7"><use href="#chev" width="10" height="7"/></svg>
<span class="t" style="letter-spacing:0.52px;left:178.9px;top:9.4px;color:#e4e4e4">Keying</span>
<svg style="left:245px;top:15.5px;color:#d6d6d6" width="10" height="7" viewBox="0 0 10 7"><use href="#chev" width="10" height="7"/></svg>
<span class="t" style="letter-spacing:0.72px;left:273.2px;top:9.4px;color:#e4e4e4">View</span>
<span class="t" style="letter-spacing:0.35px;left:333.2px;top:9.4px;color:#e4e4e4">Marker</span>
<span class="t" style="letter-spacing:4.74px;left:866.2px;top:9.4px;color:#e4e4e4">-1</span>
<span class="t" style="letter-spacing:-0.33px;left:989.6px;top:9.4px;color:#e4e4e4">Start</span>
<span class="t" style="letter-spacing:0px;left:1065.4px;top:9.4px;color:#e4e4e4">1</span>
<span class="t" style="letter-spacing:0.39px;left:1118.6px;top:9.4px;color:#e4e4e4">End</span>
<span class="t" style="letter-spacing:1.82px;left:1165.6px;top:9.4px;color:#e4e4e4">250</span>
<svg style="left:17px;top:8px;" width="22" height="22" viewBox="0 0 22 22"><circle cx="10.800" cy="10.500" r="10.400" fill="#e8e8e8"/><path d="M14 4.200L9 10.500L14 16.600" fill="none" stroke="#282828" stroke-width="2.600" stroke-linejoin="miter"/></svg>
<svg style="left:41px;top:15.5px;color:#d6d6d6" width="10" height="7" viewBox="0 0 10 7"><use href="#chev" width="10" height="7"/></svg>
<svg style="left:487px;top:10px;" width="17" height="17" viewBox="0 0 17 17"><circle cx="8.500" cy="8.500" r="6.800" fill="none" stroke="#d0d0d0" stroke-width="1.400"/></svg>
<svg style="left:518.5px;top:15.5px;color:#5c5c5c" width="10" height="7" viewBox="0 0 10 7"><use href="#chev" width="10" height="7"/></svg>
<svg style="left:548.65px;top:6.7px;" width="24" height="24" viewBox="0 0 20 20"><rect x="4" y="3.500" width="2.400" height="13" fill="#ececec"/><path d="M16.500 3.500V16.500L7.500 10Z" fill="#ececec"/></svg>
<svg style="left:577px;top:6.7px;" width="24" height="24" viewBox="0 0 20 20"><path d="M1 10L6 5L11 10L6 15Z" fill="#ececec"/><path d="M19 4V16L12 10Z" fill="#ececec"/></svg>
<svg style="left:606px;top:6.7px;" width="24" height="24" viewBox="0 0 20 20"><path d="M16 2.500V17.500L3.500 10Z" fill="#ececec"/></svg>
<svg style="left:635px;top:6.7px;" width="24" height="24" viewBox="0 0 20 20"><path d="M4 2.500V17.500L16.500 10Z" fill="#ececec"/></svg>
<svg style="left:664.1px;top:6.7px;" width="24" height="24" viewBox="0 0 20 20"><path d="M19 10L14 5L9 10L14 15Z" fill="#ececec"/><path d="M1 4V16L8 10Z" fill="#ececec"/></svg>
<svg style="left:692.85px;top:6.7px;" width="24" height="24" viewBox="0 0 20 20"><rect x="13.600" y="3.500" width="2.400" height="13" fill="#ececec"/><path d="M3.500 3.500V16.500L12.500 10Z" fill="#ececec"/></svg>
<svg style="left:941px;top:8px;" width="23" height="23" viewBox="0 0 23 23"><g fill="none" stroke="#dcdcdc" stroke-width="1.500" stroke-linecap="round"><circle cx="11" cy="13" r="8.300"/><path d="M11 8V13.500H15.500M11 4.500V2M7.500 1.500H14.500M18.500 4.500L20.500 2.800"/></g></svg>
<span class="t" style="letter-spacing:1.43px;left:121.2px;top:45.8px;color:#b4b4b4">20</span>
<span class="t" style="letter-spacing:1.43px;left:212.8px;top:45.8px;color:#b4b4b4">40</span>
<span class="t" style="letter-spacing:1.43px;left:304.4px;top:45.8px;color:#b4b4b4">60</span>
<span class="t" style="letter-spacing:1.43px;left:396px;top:45.8px;color:#b4b4b4">80</span>
<span class="t" style="letter-spacing:1.17px;left:482.15px;top:45.8px;color:#b4b4b4">100</span>
<span class="t" style="letter-spacing:1.17px;left:573.75px;top:45.8px;color:#b4b4b4">120</span>
<span class="t" style="letter-spacing:1.17px;left:665.35px;top:45.8px;color:#b4b4b4">140</span>
<span class="t" style="letter-spacing:1.17px;left:756.95px;top:45.8px;color:#b4b4b4">160</span>
<span class="t" style="letter-spacing:1.17px;left:848.55px;top:45.8px;color:#b4b4b4">180</span>
<span class="t" style="letter-spacing:1.17px;left:940.15px;top:45.8px;color:#b4b4b4">200</span>
<span class="t" style="letter-spacing:1.17px;left:1031.75px;top:45.8px;color:#b4b4b4">220</span>
<span class="t" style="letter-spacing:1.17px;left:1123.35px;top:45.8px;color:#b4b4b4">240</span>
<div class="a" style="left:17.3px;top:41.3px;width:36px;height:26px;background:#4772b3;border-radius:4px;"></div>
<span class="t" style="letter-spacing:3.34px;left:26.4px;top:45.8px;color:#fff">-1</span>
</div>
<!-- NODE EDITOR -->
<div class="area" id="nodeed" style="left:1239px;top:976px;width:679px;height:72px;background:#1d1d1d">
<div class="a" style="left:10.3px;top:5px;width:44.7px;height:27.3px;border-radius:5px;overflow:hidden;box-shadow:0 0 0 1px #3c3c3c"><div class="a" style="left:0px;top:0;width:44.7px;height:100%;background:#282828"></div></div>
<div class="a" style="left:63.3px;top:5px;width:115px;height:27.3px;border-radius:5px;overflow:hidden;box-shadow:0 0 0 1px #3c3c3c"><div class="a" style="left:0px;top:0;width:115px;height:100%;background:#282828"></div></div>
<div class="a" style="left:457.7px;top:5px;width:219px;height:27.3px;border-radius:5px;overflow:hidden;box-shadow:0 0 0 1px #3c3c3c"><div class="a" style="left:0px;top:0;width:45px;height:100%;background:#282828"></div><div class="a" style="left:45px;top:0;width:174px;height:100%;background:#545454"></div></div>
<svg style="left:16px;top:8px;" width="24" height="24" viewBox="0 0 24 24"><circle cx="3.800" cy="3" r="1.900" fill="#8a8a8a"/><circle cx="10.300" cy="4.300" r="2.700" fill="#9a9a9a"/><circle cx="6.700" cy="11.300" r="3.300" fill="#b8b8b8"/><circle cx="17.200" cy="15.700" r="5.500" fill="#ececec"/></svg>
<svg style="left:41px;top:15.5px;color:#d6d6d6" width="10" height="7" viewBox="0 0 10 7"><use href="#chev" width="10" height="7"/></svg>
<span class="t" style="letter-spacing:0.47px;left:74.2px;top:9.4px;color:#e4e4e4">Modifier</span>
<svg style="left:164px;top:15.5px;color:#d6d6d6" width="10" height="7" viewBox="0 0 10 7"><use href="#chev" width="10" height="7"/></svg>
<span class="t" style="letter-spacing:0.69px;left:196.6px;top:9.4px;color:#e4e4e4">View</span>
<span class="t" style="letter-spacing:0.44px;left:256.6px;top:9.4px;color:#e4e4e4">Select</span>
<span class="t" style="letter-spacing:0.81px;left:328.6px;top:9.4px;color:#e4e4e4">Add</span>
<span class="t" style="letter-spacing:0.68px;left:381.2px;top:9.4px;color:#e4e4e4">Node</span>
<svg style="left:463px;top:8px;" width="22" height="22" viewBox="0 0 22 22"><g fill="#e0e0e0"><rect x="2" y="2" width="12" height="6.500" rx="1.500"/><rect x="2" y="13.500" width="12" height="6.500" rx="1.500"/></g><g fill="none" stroke="#e0e0e0" stroke-width="1.300"><path d="M15 4.500H17A2 2 0 0 1 19 6.500V15A2 2 0 0 1 17 17H16"/><path d="M17.500 15L15.500 17L17.500 19"/><rect x="1.300" y="1.300" width="13.400" height="7.900" rx="1.800" opacity="0.500"/></g></svg>
<svg style="left:488px;top:15.5px;color:#d6d6d6" width="10" height="7" viewBox="0 0 10 7"><use href="#chev" width="10" height="7"/></svg>
<svg style="left:513px;top:11px;" width="15" height="15" viewBox="0 0 15 15"><path d="M0.500 7.500H14.500M7.500 0.500V14.500" stroke="#e6e6e6" stroke-width="1.500"/></svg>
<span class="t" style="letter-spacing:1.24px;left:584.2px;top:9.4px;color:#e4e4e4">New</span>
<div class="a" style="left:272px;top:39px;width:395.7px;height:35px;background:#3c3c3c;border-radius:6px 6px 0 0;"></div>
<svg style="left:284.5px;top:54px;" width="13" height="7.6" viewBox="0 0 13 7.6"><path d="M0.800 0.800L6.500 6.500L12.200 0.800" fill="none" stroke="#d0d0d0" stroke-width="1.500" stroke-linecap="round" stroke-linejoin="round"/></svg>
<span class="t" style="letter-spacing:0.46px;left:302.6px;top:49.4px;color:#e6e6e6">Active Tool</span>
<svg style="left:638px;top:54.5px;" width="16" height="7" viewBox="0 0 16 7"><g fill="#7a7a7a"><rect x="0" y="0" width="1.300" height="1.300"/><rect x="0" y="4.7" width="1.300" height="1.300"/><rect x="4.7" y="0" width="1.300" height="1.300"/><rect x="4.7" y="4.7" width="1.300" height="1.300"/><rect x="9.4" y="0" width="1.300" height="1.300"/><rect x="9.4" y="4.7" width="1.300" height="1.300"/><rect x="14.1" y="0" width="1.300" height="1.300"/><rect x="14.1" y="4.7" width="1.300" height="1.300"/></g></svg>
<div class="a" style="left:11px;top:64.3px;width:261px;height:4.7px;background:#373737;border-radius:2.500px;"></div>
<div class="a" style="left:672px;top:40px;width:6px;height:34px;background:#3a3a3a;border-radius:3px;"></div>
</div>
<!-- STATUSBAR -->
<div class="a" id="status" style="left:0;top:1047px;width:1920px;height:33px;background:#181818">
<svg style="left:15px;top:4.5px;" width="18" height="23" viewBox="0 0 18 23"><rect x="1" y="1" width="15.500" height="21" rx="4.500" fill="none" stroke="#a8a8a8" stroke-width="1.400"/><path d="M1.500 9.500V5.500A4 4 0 0 1 5.500 1.500H7.500V9.500Z" fill="#a8a8a8"/></svg>
<span class="t" style="letter-spacing:-0.0px;left:32.2px;top:6.7px;color:#9c9c9c">Select (List)</span>
<svg style="left:140.7px;top:4.5px;" width="18" height="23" viewBox="0 0 18 23"><rect x="1" y="1" width="15.500" height="21" rx="4.500" fill="none" stroke="#a8a8a8" stroke-width="1.400"/><rect x="6.300" y="3.500" width="5" height="8" rx="1.500" fill="#a8a8a8"/></svg>
<span class="t" style="letter-spacing:0.06px;left:158.2px;top:6.7px;color:#9c9c9c">Center View to Mouse</span>
<svg style="left:1819px;top:5px;" width="24" height="22" viewBox="0 0 24 22"><g fill="none" stroke="#8c8c8c" stroke-width="1.400"><circle cx="12" cy="11" r="8.500"/><ellipse cx="12" cy="11" rx="3.800" ry="8.500"/><path d="M3.500 11H20.500"/></g><path d="M2 2L22 20" stroke="#181818" stroke-width="4"/><path d="M2 2L22 20" stroke="#8c8c8c" stroke-width="1.500"/></svg>
<div class="a" style="left:1853px;top:7px;width:1.3px;height:20px;background:#8c8c8c;border-radius:0;"></div>
<span class="t" style="letter-spacing:0.27px;left:1859.9px;top:6.7px;color:#9c9c9c">4.5.3</span>
<div class="a" style="left:54px;top:31px;width:387px;height:2px;background:#e4e4e4;border-radius:0;"></div>
<div class="a" style="left:785px;top:31px;width:48px;height:2px;background:#4a4a4a;border-radius:0;"></div>
</div>
</body>
</html>
